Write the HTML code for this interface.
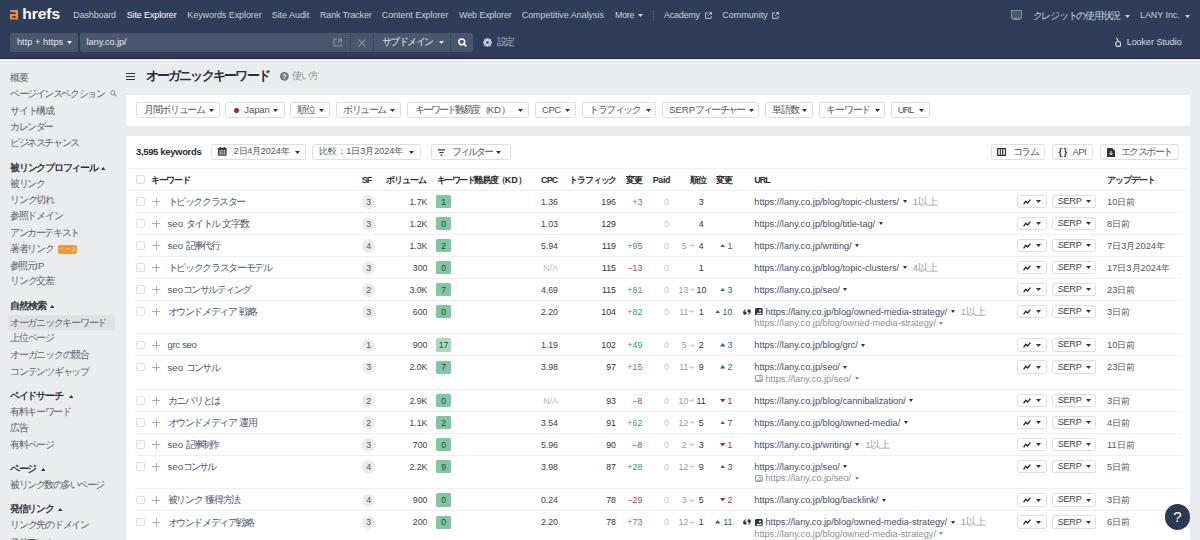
<!DOCTYPE html>
<html><head><meta charset="utf-8"><style>
*{margin:0;padding:0}
i{font-style:normal}
html,body{width:1200px;height:540px;overflow:hidden;background:#ebecee;font-family:"Liberation Sans", sans-serif;}
.t,.b,.ua{position:absolute;white-space:nowrap}
.ua{height:12px;line-height:12px;font-size:9.2px;color:#3f4b67}
.ua .u2{color:#8a8e96}
.car{display:inline-block;width:0;height:0;border-left:2.5px solid transparent;border-right:2.5px solid transparent;border-top:3px solid #333;margin-left:3.5px;vertical-align:1.5px}
.car.c2{border-top-color:#888}
.more{color:#9a9ea6;margin-left:6px;font-size:9.5px}
</style></head><body>

<div class="b" style="left:0px;top:0px;width:1200px;height:58.6px;background:#303d58;"></div>
<div class="b" style="left:0px;top:58px;width:1200px;height:1px;background:#1f2838;"></div>
<div class="b" style="left:0px;top:59px;width:1200px;height:1.5px;background:#eef0f7;"></div>
<svg class="b" style="left:9.8px;top:10.2px" width="8" height="9.6" viewBox="0 0 8 9.6"><path fill-rule="evenodd" d="M0.3 0H8V9.6H0V4H5.6V2.3H0.3ZM2.3 5.9V7.7H5.6V5.9Z" fill="#f28b3b"></path></svg>
<div class="t f" style="top:5.0px;font-size:15.5px;line-height:18px;color:#ffffff;font-weight:bold;left:22.2px;--w:38;"><span style="letter-spacing: 0.021px;">hrefs</span></div>
<div class="t f" style="top:10.05px;font-size:9px;line-height:11.7px;color:#c9d0dc;left:73.3px;--w:42.7;"><span style="letter-spacing: -0.157px;">Dashboard</span></div>
<div class="t f" style="top:10.05px;font-size:9px;line-height:11.7px;color:#ffffff;left:126.7px;--w:50;"><span style="letter-spacing: -0.122px;">Site Explorer</span></div>
<div class="t f" style="top:10.05px;font-size:9px;line-height:11.7px;color:#c9d0dc;left:187.3px;--w:74.4;"><span style="letter-spacing: -0.069px;">Keywords Explorer</span></div>
<div class="t f" style="top:10.05px;font-size:9px;line-height:11.7px;color:#c9d0dc;left:271.7px;--w:37.6;"><span style="letter-spacing: -0.045px;">Site Audit</span></div>
<div class="t f" style="top:10.05px;font-size:9px;line-height:11.7px;color:#c9d0dc;left:320px;--w:51.7;"><span style="letter-spacing: -0.159px;">Rank Tracker</span></div>
<div class="t f" style="top:10.05px;font-size:9px;line-height:11.7px;color:#c9d0dc;left:381.7px;--w:66.6;"><span style="letter-spacing: -0.061px;">Content Explorer</span></div>
<div class="t f" style="top:10.05px;font-size:9px;line-height:11.7px;color:#c9d0dc;left:459px;--w:52.7;"><span style="letter-spacing: -0.144px;">Web Explorer</span></div>
<div class="t f" style="top:10.05px;font-size:9px;line-height:11.7px;color:#c9d0dc;left:521.7px;--w:82.3;"><span style="letter-spacing: -0.038px;">Competitive Analysis</span></div>
<div class="t f" style="top:10.05px;font-size:9px;line-height:11.7px;color:#c9d0dc;left:615px;--w:19.3;"><span style="letter-spacing: -0.347px;">More</span></div>
<div class="t f" style="top:10.05px;font-size:9px;line-height:11.7px;color:#c9d0dc;left:664px;--w:36;"><span style="letter-spacing: -0.236px;">Academy</span></div>
<div class="t f" style="top:10.05px;font-size:9px;line-height:11.7px;color:#c9d0dc;left:722.3px;--w:45.4;"><span style="letter-spacing: -0.014px;">Community</span></div>
<svg class="b" style="left:638.3px;top:14.2px" width="5" height="3.2" viewBox="0 0 5 3.2"><polygon points="0,0 5,0 2.5,3.2" fill="#c9d0dc"></polygon></svg>
<div class="b" style="left:653px;top:11px;width:1px;height:10px;background:transparent;border-left:1px dotted #5d6880;"></div>
<svg class="b" style="left:705px;top:12.2px" width="7" height="7" viewBox="0 0 7 7"><path d="M3 0.9H0.6V6.4H6.1V4" fill="none" stroke="#c9d0dc" stroke-width="0.9"></path><path d="M4 0.6H6.4V3M6.4 0.6L3.2 3.8" fill="none" stroke="#c9d0dc" stroke-width="0.9"></path></svg>
<svg class="b" style="left:771.7px;top:12.2px" width="7" height="7" viewBox="0 0 7 7"><path d="M3 0.9H0.6V6.4H6.1V4" fill="none" stroke="#c9d0dc" stroke-width="0.9"></path><path d="M4 0.6H6.4V3M6.4 0.6L3.2 3.8" fill="none" stroke="#c9d0dc" stroke-width="0.9"></path></svg>
<svg class="b" style="left:1010.8px;top:10px" width="11" height="10" viewBox="0 0 11 10"><rect x="0.6" y="0.6" width="9.8" height="7.5" fill="none" stroke="#8b94a6" stroke-width="1.2"></rect><rect x="2" y="2" width="7" height="5" fill="#8b94a6" opacity="0.35"></rect><path d="M2 9.4H9" stroke="#8b94a6" stroke-width="1.2"></path></svg>
<div class="t f" style="top:9.62px;font-size:9.5px;line-height:12.35px;color:#c9d0dc;left:1032.5px;--w:87.5;"><span style="letter-spacing: 0px;"><i style="letter-spacing: -1.25px;">クレジットの使用状況</i></span></div>
<svg class="b" style="left:1125.3px;top:14.6px" width="5" height="3.2" viewBox="0 0 5 3.2"><polygon points="0,0 5,0 2.5,3.2" fill="#c9d0dc"></polygon></svg>
<div class="t f" style="top:9.95px;font-size:9px;line-height:11.7px;color:#c9d0dc;left:1140px;--w:39.7;"><span style="letter-spacing: -0.078px;">LANY Inc.</span></div>
<svg class="b" style="left:1185.3px;top:14.8px" width="5" height="3.2" viewBox="0 0 5 3.2"><polygon points="0,0 5,0 2.5,3.2" fill="#c9d0dc"></polygon></svg>
<div class="b" style="left:10px;top:33px;width:68px;height:19px;background:#4b566e;border-radius:2px;"></div>
<div class="t f" style="top:36.62px;font-size:9.2px;line-height:11.96px;color:#e6e9ef;left:16.9px;--w:46.3;"><span style="letter-spacing: 0.051px;">http + https</span></div>
<svg class="b" style="left:67.2px;top:41.4px" width="5" height="3.2" viewBox="0 0 5 3.2"><polygon points="0,0 5,0 2.5,3.2" fill="#e6e9ef"></polygon></svg>
<div class="b" style="left:80px;top:33px;width:392.5px;height:19px;background:#4b566e;border-radius:2px;"></div>
<div class="t f" style="top:36.62px;font-size:9.2px;line-height:11.96px;color:#e6e9ef;left:86.6px;--w:39.9;"><span style="letter-spacing: -0.075px;">lany.co.jp/</span></div>
<svg class="b" style="left:332.6px;top:38px" width="9.5" height="9" viewBox="0 0 9.5 9"><path d="M3.5 1H1V8H8V5.5" fill="none" stroke="#8c95a8" stroke-width="1.1"></path><path d="M5 1H8.3V4.3M8.3 1L4.5 4.8" fill="none" stroke="#8c95a8" stroke-width="1.1"></path></svg>
<div class="b" style="left:350px;top:34px;width:1px;height:17px;background:transparent;border-left:1px dotted #2e3850;"></div>
<div class="b" style="left:373.4px;top:34px;width:1.0px;height:17px;background:transparent;border-left:1px dotted #2e3850;"></div>
<div class="b" style="left:449.5px;top:34px;width:1.0px;height:17px;background:transparent;border-left:1px dotted #2e3850;"></div>
<svg class="b" style="left:357.5px;top:38.5px" width="8" height="8" viewBox="0 0 8 8"><path d="M0.7 0.7L7.3 7.3M7.3 0.7L0.7 7.3" stroke="#8c95a8" stroke-width="1.1"></path></svg>
<div class="t f" style="top:36.43px;font-size:9.5px;line-height:12.35px;color:#e6e9ef;left:381.5px;--w:51.5;"><span style="letter-spacing: 0px;"><i style="letter-spacing: -1.417px;">サブドメイン</i></span></div>
<svg class="b" style="left:438.5px;top:41.3px" width="5" height="3" viewBox="0 0 5 3"><polygon points="0,0 5,0 2.5,3" fill="#e6e9ef"></polygon></svg>
<svg class="b" style="left:457.6px;top:38.2px" width="9" height="9" viewBox="0 0 9 9"><circle cx="3.8" cy="3.8" r="2.9" fill="none" stroke="#fff" stroke-width="1.5"></circle><path d="M5.9 5.9L8.4 8.4" stroke="#fff" stroke-width="1.6"></path></svg>
<svg class="b" style="left:483px;top:38.2px" width="9" height="9" viewBox="0 0 9 9"><g transform="translate(4.5 4.5)" fill="#c9d0dc"><circle r="3.2"></circle><rect x="-1" y="-4.5" width="2" height="2.2" transform="rotate(0)"></rect><rect x="-1" y="-4.5" width="2" height="2.2" transform="rotate(45)"></rect><rect x="-1" y="-4.5" width="2" height="2.2" transform="rotate(90)"></rect><rect x="-1" y="-4.5" width="2" height="2.2" transform="rotate(135)"></rect><rect x="-1" y="-4.5" width="2" height="2.2" transform="rotate(180)"></rect><rect x="-1" y="-4.5" width="2" height="2.2" transform="rotate(225)"></rect><rect x="-1" y="-4.5" width="2" height="2.2" transform="rotate(270)"></rect><rect x="-1" y="-4.5" width="2" height="2.2" transform="rotate(315)"></rect><circle r="1.3" fill="#2e3b55"></circle></g></svg>
<div class="t f" style="top:36.43px;font-size:9.5px;line-height:12.35px;color:#aab2c2;left:496.5px;--w:17.5;"><span style="letter-spacing: 0px;"><i style="letter-spacing: -1.25px;">設定</i></span></div>
<svg class="b" style="left:1114.7px;top:36.5px" width="6.5" height="10.5" viewBox="0 0 6.5 10.5"><circle cx="3.2" cy="7" r="2.5" fill="none" stroke="#d6dbe4" stroke-width="1.2"></circle><path d="M1.5 0.8L3.3 4.3" stroke="#d6dbe4" stroke-width="1.2"></path></svg>
<div class="t f" style="top:36.65px;font-size:9px;line-height:11.7px;color:#d6dbe4;left:1126.7px;--w:55;"><span style="letter-spacing: -0.044px;">Looker Studio</span></div>
<div class="b" style="left:7.8px;top:314.9px;width:107.7px;height:15.1px;background:#dfe1e5;border-radius:3px;"></div>
<div class="t f" style="top:71.76px;font-size:9.6px;line-height:12.48px;color:#5c6068;left:10px;--w:17.1;"><span style="letter-spacing: 0px;"><i style="letter-spacing: -1.45px;">概要</i></span></div>
<div class="t f" style="top:88.26px;font-size:9.6px;line-height:12.48px;color:#5c6068;left:10px;--w:94.4;"><span style="letter-spacing: 0px;"><i style="letter-spacing: -1.418px;">ページインスペクション</i></span></div>
<div class="t f" style="top:105.16px;font-size:9.6px;line-height:12.48px;color:#5c6068;left:10px;--w:43.8;"><span style="letter-spacing: 0px;"><i style="letter-spacing: -1.24px;">サイト構成</i></span></div>
<div class="t f" style="top:120.66px;font-size:9.6px;line-height:12.48px;color:#5c6068;left:10px;--w:42.7;"><span style="letter-spacing: 0px;"><i style="letter-spacing: -1.46px;">カレンダー</i></span></div>
<div class="t f" style="top:137.36px;font-size:9.6px;line-height:12.48px;color:#5c6068;left:10px;--w:68.9;"><span style="letter-spacing: 0px;"><i style="letter-spacing: -1.387px;">ビジネスチャンス</i></span></div>
<div class="t f" style="top:161.76px;font-size:9.6px;line-height:12.48px;color:#2f343c;font-weight:bold;left:10px;--w:87.8;"><span style="letter-spacing: 0px;"><i style="letter-spacing: -1.22px;">被リンクプロフィール</i></span></div>
<div class="t f" style="top:177.76px;font-size:9.6px;line-height:12.48px;color:#5c6068;left:10px;--w:34.4;"><span style="letter-spacing: 0px;"><i style="letter-spacing: -1.4px;">被リンク</i></span></div>
<div class="t f" style="top:194.06px;font-size:9.6px;line-height:12.48px;color:#5c6068;left:10px;--w:43.8;"><span style="letter-spacing: 0px;"><i style="letter-spacing: -1.24px;">リンク切れ</i></span></div>
<div class="t f" style="top:210.46px;font-size:9.6px;line-height:12.48px;color:#5c6068;left:10px;--w:52.2;"><span style="letter-spacing: 0px;"><i style="letter-spacing: -1.3px;">参照ドメイン</i></span></div>
<div class="t f" style="top:227.16px;font-size:9.6px;line-height:12.48px;color:#5c6068;left:10px;--w:68.9;"><span style="letter-spacing: 0px;"><i style="letter-spacing: -1.387px;">アンカーテキスト</i></span></div>
<div class="t f" style="top:243.36px;font-size:9.6px;line-height:12.48px;color:#5c6068;left:10px;--w:43.3;"><span style="letter-spacing: 0px;"><i style="letter-spacing: -1.34px;">著者リンク</i></span></div>
<div class="t f" style="top:260.06px;font-size:9.6px;line-height:12.48px;color:#5c6068;left:10px;--w:34.4;"><span style="letter-spacing: 0px;"><i style="letter-spacing: -1.559px;">参照元</i>IP</span></div>
<div class="t f" style="top:275.46px;font-size:9.6px;line-height:12.48px;color:#5c6068;left:10px;--w:43.8;"><span style="letter-spacing: 0px;"><i style="letter-spacing: -1.24px;">リンク交差</i></span></div>
<div class="t f" style="top:300.46px;font-size:9.6px;line-height:12.48px;color:#2f343c;font-weight:bold;left:10px;--w:35.6;"><span style="letter-spacing: 0px;"><i style="letter-spacing: -1.1px;">自然検索</i></span></div>
<div class="t f" style="top:316.66px;font-size:9.6px;line-height:12.48px;color:#5c6068;left:10px;--w:96.2;"><span style="letter-spacing: 0px;"><i style="letter-spacing: -1.255px;">オーガニックキーワード</i></span></div>
<div class="t f" style="top:332.26px;font-size:9.6px;line-height:12.48px;color:#5c6068;left:10px;--w:43.8;"><span style="letter-spacing: 0px;"><i style="letter-spacing: -1.24px;">上位ページ</i></span></div>
<div class="t f" style="top:349.36px;font-size:9.6px;line-height:12.48px;color:#5c6068;left:10px;--w:78.9;"><span style="letter-spacing: 0px;"><i style="letter-spacing: -1.233px;">オーガニックの競合</i></span></div>
<div class="t f" style="top:365.56px;font-size:9.6px;line-height:12.48px;color:#5c6068;left:10px;--w:78.9;"><span style="letter-spacing: 0px;"><i style="letter-spacing: -1.233px;">コンテンツギャップ</i></span></div>
<div class="t f" style="top:390.06px;font-size:9.6px;line-height:12.48px;color:#2f343c;font-weight:bold;left:10px;--w:52.2;"><span style="letter-spacing: 0px;"><i style="letter-spacing: -1.3px;">ペイドサーチ</i></span></div>
<div class="t f" style="top:405.96px;font-size:9.6px;line-height:12.48px;color:#5c6068;left:10px;--w:60.5;"><span style="letter-spacing: 0px;"><i style="letter-spacing: -1.357px;">有料キーワード</i></span></div>
<div class="t f" style="top:422.46px;font-size:9.6px;line-height:12.48px;color:#5c6068;left:10px;--w:17.5;"><span style="letter-spacing: 0px;"><i style="letter-spacing: -1.25px;">広告</i></span></div>
<div class="t f" style="top:438.86px;font-size:9.6px;line-height:12.48px;color:#5c6068;left:10px;--w:43.8;"><span style="letter-spacing: 0px;"><i style="letter-spacing: -1.24px;">有料ページ</i></span></div>
<div class="t f" style="top:462.76px;font-size:9.6px;line-height:12.48px;color:#2f343c;font-weight:bold;left:10px;--w:25.5;"><span style="letter-spacing: 0px;"><i style="letter-spacing: -1.5px;">ページ</i></span></div>
<div class="t f" style="top:479.06px;font-size:9.6px;line-height:12.48px;color:#5c6068;left:10px;--w:94;"><span style="letter-spacing: 0px;"><i style="letter-spacing: -1.455px;">被リンク数の多いページ</i></span></div>
<div class="t f" style="top:503.16px;font-size:9.6px;line-height:12.48px;color:#2f343c;font-weight:bold;left:10px;--w:43.5;"><span style="letter-spacing: 0px;"><i style="letter-spacing: -1.3px;">発信リンク</i></span></div>
<div class="t f" style="top:519.46px;font-size:9.6px;line-height:12.48px;color:#5c6068;left:10px;--w:78.9;"><span style="letter-spacing: 0px;"><i style="letter-spacing: -1.233px;">リンク先のドメイン</i></span></div>
<div class="t f" style="top:536.96px;font-size:9.6px;line-height:12.48px;color:#5c6068;left:10px;--w:52;"><span style="letter-spacing: 0px;"><i style="letter-spacing: -1.333px;">発信アンカー</i></span></div>
<svg class="b" style="left:101px;top:166.5px" width="4.5" height="3" viewBox="0 0 4.5 3"><polygon points="0,3 4.5,3 2.25,0" fill="#333"></polygon></svg>
<svg class="b" style="left:49.5px;top:305.2px" width="4.5" height="3" viewBox="0 0 4.5 3"><polygon points="0,3 4.5,3 2.25,0" fill="#333"></polygon></svg>
<svg class="b" style="left:68.5px;top:394.8px" width="4.5" height="3" viewBox="0 0 4.5 3"><polygon points="0,3 4.5,3 2.25,0" fill="#333"></polygon></svg>
<svg class="b" style="left:40.5px;top:467.5px" width="4.5" height="3" viewBox="0 0 4.5 3"><polygon points="0,3 4.5,3 2.25,0" fill="#333"></polygon></svg>
<svg class="b" style="left:58px;top:507.9px" width="4.5" height="3" viewBox="0 0 4.5 3"><polygon points="0,3 4.5,3 2.25,0" fill="#333"></polygon></svg>
<svg class="b" style="left:110px;top:90px" width="7" height="7" viewBox="0 0 7 7"><circle cx="2.8" cy="2.8" r="2.1" fill="none" stroke="#888" stroke-width="1"></circle><path d="M4.3 4.3L6.3 6.3" stroke="#888" stroke-width="1.1"></path></svg>
<div class="b" style="left:58.2px;top:244.6px;width:19.1px;height:9.8px;background:#ee983c;border-radius:2px;"></div>
<div class="t" style="top:246.03px;font-size:5.5px;line-height:7.15px;color:#f9d3a8;left:-82.25px;width:300px;text-align:center;"><span><i>ベータ</i></span></div>
<div class="b" style="left:125.7px;top:72.7px;width:9.3px;height:1.2px;background:#333;"></div>
<div class="b" style="left:125.7px;top:75.9px;width:9.3px;height:1.2px;background:#333;"></div>
<div class="b" style="left:125.7px;top:79.10000000000001px;width:9.3px;height:1.2px;background:#333;"></div>
<div class="t f" style="top:67.75px;font-size:13px;line-height:16.9px;color:#2a2e35;font-weight:bold;left:145.5px;--w:123.5;"><span style="letter-spacing: 0px;"><i style="letter-spacing: -1.773px;">オーガニックキーワード</i></span></div>
<svg class="b" style="left:280px;top:71.8px" width="8.8" height="8.8" viewBox="0 0 8.8 8.8"><circle cx="4.4" cy="4.4" r="4.4" fill="#777"></circle><text x="4.4" y="7.2" font-size="7" font-weight="bold" text-anchor="middle" fill="#fff" font-family="Liberation Sans">?</text></svg>
<div class="t f" style="top:69.96px;font-size:9.6px;line-height:12.48px;color:#8a8f98;left:292px;--w:26;"><span style="letter-spacing: 0px;"><i style="letter-spacing: -1.333px;">使い方</i></span></div>
<div class="b" style="left:125.6px;top:94.6px;width:1064.4px;height:31.6px;background:#fff;"></div>
<div class="b" style="left:136.3px;top:102.1px;width:83.7px;height:16.2px;background:#fff;box-sizing:border-box;border:1px solid #dcdee2;border-radius:2.5px;"></div>
<div class="t f" style="top:104.02px;font-size:9.5px;line-height:12.35px;color:#555;left:144px;--w:60.5;"><span style="letter-spacing: 0px;"><i style="letter-spacing: -1.357px;">月間ボリューム</i></span></div>
<svg class="b" style="left:208.5px;top:108.9px" width="5" height="3" viewBox="0 0 5 3"><polygon points="0,0 5,0 2.5,3" fill="#333"></polygon></svg>
<div class="b" style="left:225.4px;top:102.1px;width:59.4px;height:16.2px;background:#fff;box-sizing:border-box;border:1px solid #dcdee2;border-radius:2.5px;"></div>
<div class="t f" style="top:104.02px;font-size:9.5px;line-height:12.35px;color:#555;left:244.3px;--w:25.5;"><span style="letter-spacing: -0.087px;">Japan</span></div>
<svg class="b" style="left:272.7px;top:108.9px" width="5" height="3" viewBox="0 0 5 3"><polygon points="0,0 5,0 2.5,3" fill="#333"></polygon></svg>
<div class="b" style="left:290px;top:102.1px;width:39.5px;height:16.2px;background:#fff;box-sizing:border-box;border:1px solid #dcdee2;border-radius:2.5px;"></div>
<div class="t f" style="top:104.02px;font-size:9.5px;line-height:12.35px;color:#555;left:296.7px;--w:17.8;"><span style="letter-spacing: 0px;"><i style="letter-spacing: -1.1px;">順位</i></span></div>
<svg class="b" style="left:318.5px;top:108.9px" width="5" height="3" viewBox="0 0 5 3"><polygon points="0,0 5,0 2.5,3" fill="#333"></polygon></svg>
<div class="b" style="left:335.5px;top:102.1px;width:65.75px;height:16.2px;background:#fff;box-sizing:border-box;border:1px solid #dcdee2;border-radius:2.5px;"></div>
<div class="t f" style="top:104.02px;font-size:9.5px;line-height:12.35px;color:#555;left:343px;--w:43;"><span style="letter-spacing: 0px;"><i style="letter-spacing: -1.4px;">ボリューム</i></span></div>
<svg class="b" style="left:390px;top:108.9px" width="5" height="3" viewBox="0 0 5 3"><polygon points="0,0 5,0 2.5,3" fill="#333"></polygon></svg>
<div class="b" style="left:406.75px;top:102.1px;width:122.0px;height:16.2px;background:#fff;box-sizing:border-box;border:1px solid #dcdee2;border-radius:2.5px;"></div>
<div class="t f" style="top:104.02px;font-size:9.5px;line-height:12.35px;color:#555;left:414.5px;--w:94.5;"><span style="letter-spacing: 0px;"><i style="letter-spacing: -1.87px;">キーワード難易度（</i>KD<i style="letter-spacing: -1.87px;">）</i></span></div>
<svg class="b" style="left:518px;top:108.9px" width="5" height="3" viewBox="0 0 5 3"><polygon points="0,0 5,0 2.5,3" fill="#333"></polygon></svg>
<div class="b" style="left:534.5px;top:102.1px;width:41.75px;height:16.2px;background:#fff;box-sizing:border-box;border:1px solid #dcdee2;border-radius:2.5px;"></div>
<div class="t f" style="top:104.02px;font-size:9.5px;line-height:12.35px;color:#555;left:542px;--w:19;"><span style="letter-spacing: -0.425px;">CPC</span></div>
<svg class="b" style="left:565px;top:108.9px" width="5" height="3" viewBox="0 0 5 3"><polygon points="0,0 5,0 2.5,3" fill="#333"></polygon></svg>
<div class="b" style="left:581.5px;top:102.1px;width:74.5px;height:16.2px;background:#fff;box-sizing:border-box;border:1px solid #dcdee2;border-radius:2.5px;"></div>
<div class="t f" style="top:104.02px;font-size:9.5px;line-height:12.35px;color:#555;left:589px;--w:51.5;"><span style="letter-spacing: 0px;"><i style="letter-spacing: -1.417px;">トラフィック</i></span></div>
<svg class="b" style="left:645.5px;top:108.9px" width="5" height="3" viewBox="0 0 5 3"><polygon points="0,0 5,0 2.5,3" fill="#333"></polygon></svg>
<div class="b" style="left:661.6px;top:102.1px;width:97.4px;height:16.2px;background:#fff;box-sizing:border-box;border:1px solid #dcdee2;border-radius:2.5px;"></div>
<div class="t f" style="top:104.02px;font-size:9.5px;line-height:12.35px;color:#555;left:669.2px;--w:75;"><span style="letter-spacing: 0px;">SERP<i style="letter-spacing: -1.813px;">フィーチャー</i></span></div>
<svg class="b" style="left:748.8px;top:108.9px" width="5" height="3" viewBox="0 0 5 3"><polygon points="0,0 5,0 2.5,3" fill="#333"></polygon></svg>
<div class="b" style="left:765.4px;top:102.1px;width:48.0px;height:16.2px;background:#fff;box-sizing:border-box;border:1px solid #dcdee2;border-radius:2.5px;"></div>
<div class="t f" style="top:104.02px;font-size:9.5px;line-height:12.35px;color:#555;left:772.2px;--w:26.5;"><span style="letter-spacing: 0px;"><i style="letter-spacing: -1.167px;">単語数</i></span></div>
<svg class="b" style="left:802.2px;top:108.9px" width="5" height="3" viewBox="0 0 5 3"><polygon points="0,0 5,0 2.5,3" fill="#333"></polygon></svg>
<div class="b" style="left:819.4px;top:102.1px;width:66.0px;height:16.2px;background:#fff;box-sizing:border-box;border:1px solid #dcdee2;border-radius:2.5px;"></div>
<div class="t f" style="top:104.02px;font-size:9.5px;line-height:12.35px;color:#555;left:826.2px;--w:44;"><span style="letter-spacing: 0px;"><i style="letter-spacing: -1.2px;">キーワード</i></span></div>
<svg class="b" style="left:875.2px;top:108.9px" width="5" height="3" viewBox="0 0 5 3"><polygon points="0,0 5,0 2.5,3" fill="#333"></polygon></svg>
<div class="b" style="left:891.4px;top:102.1px;width:39.0px;height:16.2px;background:#fff;box-sizing:border-box;border:1px solid #dcdee2;border-radius:2.5px;"></div>
<div class="t f" style="top:104.02px;font-size:9.5px;line-height:12.35px;color:#555;left:897.8px;--w:16;"><span style="letter-spacing: -1.206px;">URL</span></div>
<svg class="b" style="left:919.3px;top:108.9px" width="5" height="3" viewBox="0 0 5 3"><polygon points="0,0 5,0 2.5,3" fill="#333"></polygon></svg>
<div class="b" style="left:234px;top:108.3px;width:4.5px;height:4.5px;border-radius:50%;background:#a3222a"></div>
<div class="b" style="left:125.8px;top:135.8px;width:1064.2px;height:424.2px;background:#fff;"></div>
<div class="t f" style="top:146.02px;font-size:9.5px;line-height:12.35px;color:#2a2e35;font-weight:bold;left:136px;--w:65.5;"><span style="letter-spacing: -0.352px;">3,595 keywords</span></div>
<div class="b" style="left:211px;top:144px;width:95px;height:16px;background:#fff;box-sizing:border-box;border:1px solid #dcdee2;border-radius:2.5px;"></div>
<div class="t f" style="top:146.15px;font-size:9px;line-height:11.7px;color:#555;left:233.8px;--w:55.4;"><span style="letter-spacing: 0px;">2<i style="letter-spacing: -0.554px;">日</i>4<i style="letter-spacing: -0.554px;">月</i>2024<i style="letter-spacing: -0.554px;">年</i></span></div>
<svg class="b" style="left:295.3px;top:150.7px" width="5" height="3" viewBox="0 0 5 3"><polygon points="0,0 5,0 2.5,3" fill="#333"></polygon></svg>
<svg class="b" style="left:218.1px;top:147.2px" width="8.6" height="8.8" viewBox="0 0 8.6 8.8"><rect x="0" y="0.8" width="8.6" height="8" rx="1.2" fill="#34373d"></rect><rect x="1.3" y="3.2" width="6" height="4.3" fill="#e6e7e9"></rect><path d="M1.3 4.6H7.3M1.3 6H7.3M3.3 3.2V7.5M5.3 3.2V7.5" stroke="#34373d" stroke-width="0.6"></path><rect x="1.8" y="0" width="1.1" height="1.8" fill="#34373d"></rect><rect x="5.7" y="0" width="1.1" height="1.8" fill="#34373d"></rect></svg>
<div class="b" style="left:312.3px;top:144px;width:108.4px;height:16px;background:#fff;box-sizing:border-box;border:1px solid #dcdee2;border-radius:2.5px;"></div>
<div class="t f" style="top:146.15px;font-size:9px;line-height:11.7px;color:#555;left:319.3px;--w:84;"><span style="letter-spacing: 0px;"><i style="letter-spacing: -0.01px;">比較：</i>1<i style="letter-spacing: -0.01px;">日</i>3<i style="letter-spacing: -0.01px;">月</i>2024<i style="letter-spacing: -0.01px;">年</i></span></div>
<svg class="b" style="left:409.3px;top:150.7px" width="5" height="3" viewBox="0 0 5 3"><polygon points="0,0 5,0 2.5,3" fill="#333"></polygon></svg>
<div class="b" style="left:431px;top:144px;width:79.7px;height:16px;background:#fff;box-sizing:border-box;border:1px solid #dcdee2;border-radius:2.5px;"></div>
<div class="t f" style="top:145.82px;font-size:9.5px;line-height:12.35px;color:#555;left:452.3px;--w:39.4;"><span style="letter-spacing: 0px;"><i style="letter-spacing: -2.12px;">フィルター</i></span></div>
<svg class="b" style="left:496px;top:150.7px" width="5" height="3" viewBox="0 0 5 3"><polygon points="0,0 5,0 2.5,3" fill="#333"></polygon></svg>
<svg class="b" style="left:438.3px;top:148.5px" width="7" height="7" viewBox="0 0 7 7"><path d="M0 0.8H7M1.3 3.5H5.7M2.6 6.2H4.4" stroke="#333" stroke-width="1.2"></path></svg>
<div class="b" style="left:990.5px;top:144px;width:54.5px;height:16px;background:#fff;box-sizing:border-box;border:1px solid #dcdee2;border-radius:2.5px;"></div>
<div class="t f" style="top:145.82px;font-size:9.5px;line-height:12.35px;color:#555;left:1013px;--w:25;"><span style="letter-spacing: 0px;"><i style="letter-spacing: -1.667px;">コラム</i></span></div>
<svg class="b" style="left:997px;top:148px" width="9" height="8" viewBox="0 0 9 8"><rect x="0.6" y="0.6" width="7.8" height="6.8" fill="none" stroke="#333" stroke-width="1.2"></rect><path d="M3.3 0.6V7.4M5.7 0.6V7.4" stroke="#333" stroke-width="1.2"></path></svg>
<div class="b" style="left:1051.75px;top:144px;width:41.5px;height:16px;background:#fff;box-sizing:border-box;border:1px solid #dcdee2;border-radius:2.5px;"></div>
<div class="t f" style="top:145.82px;font-size:9.5px;line-height:12.35px;color:#555;left:1072.5px;--w:13.75;"><span style="letter-spacing: -0.625px;">API</span></div>
<div class="t f" style="top:145.82px;font-size:9.5px;line-height:12.35px;color:#333;font-weight:bold;left:1058.5px;--w:8.5;"><span style="letter-spacing: -0.619px;">{ }</span></div>
<div class="b" style="left:1099.5px;top:144px;width:79.7px;height:16px;background:#fff;box-sizing:border-box;border:1px solid #dcdee2;border-radius:2.5px;"></div>
<div class="t f" style="top:145.82px;font-size:9.5px;line-height:12.35px;color:#555;left:1120.8px;--w:50.9;"><span style="letter-spacing: 0px;"><i style="letter-spacing: -1.517px;">エクスポート</i></span></div>
<svg class="b" style="left:1107px;top:147.5px" width="8" height="9" viewBox="0 0 8 9"><path d="M0 0H5.2L8 2.8V9H0Z" fill="#333"></path><path d="M4 3V6.5M2.5 5.2L4 6.8L5.5 5.2" stroke="#fff" stroke-width="1" fill="none"></path></svg>
<div class="b" style="left:127px;top:168.3px;width:1061px;height:1.0px;background:#eeeff1;"></div>
<div class="b" style="left:136.3px;top:175.2px;width:8.7px;height:8.6px;background:#fff;box-sizing:border-box;border:1px solid #d7d9dd;border-radius:2px;"></div>
<div class="t f" style="top:174.55px;font-size:9px;line-height:11.7px;color:#2a2e35;font-weight:bold;left:150.8px;--w:39.2;"><span style="letter-spacing: 0px;"><i style="letter-spacing: -1.16px;">キーワード</i></span></div>
<div class="t f" style="top:174.55px;font-size:9px;line-height:11.7px;color:#2a2e35;font-weight:bold;left:361.7px;--w:10;"><span style="letter-spacing: -1.01px;">SF</span></div>
<div class="t f" style="top:174.55px;font-size:9px;line-height:11.7px;color:#2a2e35;font-weight:bold;left:385.8px;--w:40;"><span style="letter-spacing: 0px;"><i style="letter-spacing: -1px;">ボリューム</i></span></div>
<div class="t f" style="top:174.55px;font-size:9px;line-height:11.7px;color:#2a2e35;font-weight:bold;left:436.7px;--w:88.6;"><span style="letter-spacing: 0px;"><i style="letter-spacing: -1.44px;">キーワード難易度（</i>KD<i style="letter-spacing: -1.44px;">）</i></span></div>
<div class="t f" style="top:174.55px;font-size:9px;line-height:11.7px;color:#2a2e35;font-weight:bold;left:541px;--w:16.9;"><span style="letter-spacing: -0.846px;">CPC</span></div>
<div class="t f" style="top:174.55px;font-size:9px;line-height:11.7px;color:#2a2e35;font-weight:bold;left:569.4px;--w:46.8;"><span style="letter-spacing: 0px;"><i style="letter-spacing: -1.2px;">トラフィック</i></span></div>
<div class="t f" style="top:174.55px;font-size:9px;line-height:11.7px;color:#2a2e35;font-weight:bold;left:626.3px;--w:15.5;"><span style="letter-spacing: 0px;"><i style="letter-spacing: -1.25px;">変更</i></span></div>
<div class="t f" style="top:174.55px;font-size:9px;line-height:11.7px;color:#2a2e35;font-weight:bold;left:652.8px;--w:17.5;"><span style="letter-spacing: -0.433px;">Paid</span></div>
<div class="t f" style="top:174.55px;font-size:9px;line-height:11.7px;color:#2a2e35;font-weight:bold;left:689.5px;--w:16.1;"><span style="letter-spacing: 0px;"><i style="letter-spacing: -0.95px;">順位</i></span></div>
<div class="t f" style="top:174.55px;font-size:9px;line-height:11.7px;color:#2a2e35;font-weight:bold;left:716px;--w:16;"><span style="letter-spacing: 0px;"><i style="letter-spacing: -1px;">変更</i></span></div>
<div class="t f" style="top:174.55px;font-size:9px;line-height:11.7px;color:#2a2e35;font-weight:bold;left:754.3px;--w:16;"><span style="letter-spacing: -1px;">URL</span></div>
<div class="t f" style="top:174.55px;font-size:9px;line-height:11.7px;color:#2a2e35;font-weight:bold;left:1106.7px;--w:48;"><span style="letter-spacing: 0px;"><i style="letter-spacing: -1px;">アップデート</i></span></div>
<div class="b" style="left:127px;top:190px;width:1061px;height:1px;background:#eeeff1;"></div>
<div class="b" style="left:136.3px;top:197.1px;width:8.7px;height:8.7px;background:#fff;box-sizing:border-box;border:1px solid #dcdee2;border-radius:2px;"></div>
<div class="b" style="left:152px;top:201.0px;width:8px;height:1.0px;background:#a9adb3;"></div>
<div class="b" style="left:155.5px;top:197.5px;width:1.0px;height:8.0px;background:#a9adb3;"></div>
<div class="t f" style="top:195.86px;font-size:9.6px;line-height:12.48px;color:#4d5670;left:167.5px;--w:77.5;"><span style="letter-spacing: 0px;"><i style="letter-spacing: -1.389px;">トピッククラスター</i></span></div>
<div class="b" style="left:361.8px;top:195.2px;width:13.6px;height:13.6px;border-radius:50%;background:#ebebee"></div>
<div class="t" style="top:196.58px;font-size:8.8px;line-height:11.44px;color:#555;left:218.6px;width:300px;text-align:center;"><span>3</span></div>
<div class="t" style="top:196.58px;font-size:8.8px;line-height:11.44px;color:#444;left:127.5px;width:300px;text-align:right;"><span>1.7K</span></div>
<div class="b" style="left:436.2px;top:194.8px;width:14.8px;height:13.4px;background:#7fc6a2;border-radius:1.5px;"></div>
<div class="t" style="top:196.58px;font-size:8.8px;line-height:11.44px;color:#2b4a3a;left:293.6px;width:300px;text-align:center;"><span>1</span></div>
<div class="t" style="top:196.58px;font-size:8.8px;line-height:11.44px;color:#444;left:258px;width:300px;text-align:right;"><span>1.36</span></div>
<div class="t" style="top:196.58px;font-size:8.8px;line-height:11.44px;color:#333;left:316px;width:300px;text-align:right;"><span>196</span></div>
<div class="t" style="top:196.58px;font-size:8.8px;line-height:11.44px;color:#3b9a67;left:342.3px;width:300px;text-align:right;"><span>+3</span></div>
<div class="t" style="top:196.58px;font-size:8.8px;line-height:11.44px;color:#c5c7cb;left:368.8px;width:300px;text-align:right;"><span>0</span></div>
<div class="t" style="top:196.58px;font-size:8.8px;line-height:11.44px;color:#333;left:551.1px;width:300px;text-align:center;"><span>3</span></div>
<div class="ua" style="left:754.3px;top:195.5px;--cy:201.5"><span class="u">https://lany.co.jp/blog/topic-clusters/</span><span class="car"></span><span class="more">1以上</span></div>
<div class="b" style="left:1017px;top:194.7px;width:29.7px;height:13.6px;background:#fff;box-sizing:border-box;border:1px solid #dcdee2;border-radius:2.5px;"></div>
<svg class="b" style="left:1023px;top:198.5px" width="8" height="6" viewBox="0 0 8 6"><path d="M0.6 5.4L2.8 2.2L4.6 4L7.4 0.6" fill="none" stroke="#222" stroke-width="1.3"></path></svg>
<svg class="b" style="left:1035.5px;top:200.2px" width="5" height="3" viewBox="0 0 5 3"><polygon points="0,0 5,0 2.5,3" fill="#333"></polygon></svg>
<div class="b" style="left:1052px;top:194.7px;width:44.3px;height:13.6px;background:#fff;box-sizing:border-box;border:1px solid #dcdee2;border-radius:2.5px;"></div>
<div class="t f" style="top:195.82px;font-size:9.2px;line-height:11.96px;color:#444;left:1057.7px;--w:24;"><span style="letter-spacing: -0.295px;">SERP</span></div>
<svg class="b" style="left:1085.5px;top:200.2px" width="5" height="3" viewBox="0 0 5 3"><polygon points="0,0 5,0 2.5,3" fill="#333"></polygon></svg>
<div class="t" style="top:195.76px;font-size:9.3px;line-height:12.09px;color:#555;left:1107px;"><span>10<i>日前</i></span></div>
<div class="b" style="left:135px;top:211.8px;width:1047px;height:1.0px;background:#eeeff1;"></div>
<div class="b" style="left:136.3px;top:219.1px;width:8.7px;height:8.7px;background:#fff;box-sizing:border-box;border:1px solid #dcdee2;border-radius:2px;"></div>
<div class="b" style="left:152px;top:223.0px;width:8px;height:1.0px;background:#a9adb3;"></div>
<div class="b" style="left:155.5px;top:219.5px;width:1.0px;height:8.0px;background:#a9adb3;"></div>
<div class="t f" style="top:217.86px;font-size:9.6px;line-height:12.48px;color:#4d5670;left:167.5px;--w:80.6;"><span style="letter-spacing: 0px;">seo <i style="letter-spacing: -1.459px;">タイトル</i> <i style="letter-spacing: -1.459px;">文字数</i></span></div>
<div class="b" style="left:361.8px;top:217.2px;width:13.6px;height:13.6px;border-radius:50%;background:#ebebee"></div>
<div class="t" style="top:218.58px;font-size:8.8px;line-height:11.44px;color:#555;left:218.6px;width:300px;text-align:center;"><span>3</span></div>
<div class="t" style="top:218.58px;font-size:8.8px;line-height:11.44px;color:#444;left:127.5px;width:300px;text-align:right;"><span>1.2K</span></div>
<div class="b" style="left:436.2px;top:216.8px;width:14.8px;height:13.4px;background:#7fc6a2;border-radius:1.5px;"></div>
<div class="t" style="top:218.58px;font-size:8.8px;line-height:11.44px;color:#2b4a3a;left:293.6px;width:300px;text-align:center;"><span>0</span></div>
<div class="t" style="top:218.58px;font-size:8.8px;line-height:11.44px;color:#444;left:258px;width:300px;text-align:right;"><span>1.03</span></div>
<div class="t" style="top:218.58px;font-size:8.8px;line-height:11.44px;color:#333;left:316px;width:300px;text-align:right;"><span>129</span></div>
<div class="t" style="top:218.58px;font-size:8.8px;line-height:11.44px;color:#c5c7cb;left:368.8px;width:300px;text-align:right;"><span>0</span></div>
<div class="t" style="top:218.58px;font-size:8.8px;line-height:11.44px;color:#333;left:551.1px;width:300px;text-align:center;"><span>4</span></div>
<div class="ua" style="left:754.3px;top:217.5px;--cy:223.5"><span class="u">https://lany.co.jp/blog/title-tag/</span><span class="car"></span></div>
<div class="b" style="left:1017px;top:216.7px;width:29.7px;height:13.6px;background:#fff;box-sizing:border-box;border:1px solid #dcdee2;border-radius:2.5px;"></div>
<svg class="b" style="left:1023px;top:220.5px" width="8" height="6" viewBox="0 0 8 6"><path d="M0.6 5.4L2.8 2.2L4.6 4L7.4 0.6" fill="none" stroke="#222" stroke-width="1.3"></path></svg>
<svg class="b" style="left:1035.5px;top:222.2px" width="5" height="3" viewBox="0 0 5 3"><polygon points="0,0 5,0 2.5,3" fill="#333"></polygon></svg>
<div class="b" style="left:1052px;top:216.7px;width:44.3px;height:13.6px;background:#fff;box-sizing:border-box;border:1px solid #dcdee2;border-radius:2.5px;"></div>
<div class="t f" style="top:217.82px;font-size:9.2px;line-height:11.96px;color:#444;left:1057.7px;--w:24;"><span style="letter-spacing: -0.295px;">SERP</span></div>
<svg class="b" style="left:1085.5px;top:222.2px" width="5" height="3" viewBox="0 0 5 3"><polygon points="0,0 5,0 2.5,3" fill="#333"></polygon></svg>
<div class="t" style="top:217.76px;font-size:9.3px;line-height:12.09px;color:#555;left:1107px;"><span>8<i>日前</i></span></div>
<div class="b" style="left:135px;top:233.8px;width:1047px;height:1.0px;background:#eeeff1;"></div>
<div class="b" style="left:136.3px;top:241.1px;width:8.7px;height:8.7px;background:#fff;box-sizing:border-box;border:1px solid #dcdee2;border-radius:2px;"></div>
<div class="b" style="left:152px;top:245.0px;width:8px;height:1.0px;background:#a9adb3;"></div>
<div class="b" style="left:155.5px;top:241.5px;width:1.0px;height:8.0px;background:#a9adb3;"></div>
<div class="t f" style="top:239.86px;font-size:9.6px;line-height:12.48px;color:#4d5670;left:167.5px;--w:51.6;"><span style="letter-spacing: 0px;">seo <i style="letter-spacing: -1.635px;">記事代行</i></span></div>
<div class="b" style="left:361.8px;top:239.2px;width:13.6px;height:13.6px;border-radius:50%;background:#ebebee"></div>
<div class="t" style="top:240.58px;font-size:8.8px;line-height:11.44px;color:#555;left:218.6px;width:300px;text-align:center;"><span>4</span></div>
<div class="t" style="top:240.58px;font-size:8.8px;line-height:11.44px;color:#444;left:127.5px;width:300px;text-align:right;"><span>1.3K</span></div>
<div class="b" style="left:436.2px;top:238.8px;width:14.8px;height:13.4px;background:#7fc6a2;border-radius:1.5px;"></div>
<div class="t" style="top:240.58px;font-size:8.8px;line-height:11.44px;color:#2b4a3a;left:293.6px;width:300px;text-align:center;"><span>2</span></div>
<div class="t" style="top:240.58px;font-size:8.8px;line-height:11.44px;color:#444;left:258px;width:300px;text-align:right;"><span>5.94</span></div>
<div class="t" style="top:240.58px;font-size:8.8px;line-height:11.44px;color:#333;left:316px;width:300px;text-align:right;"><span>119</span></div>
<div class="t" style="top:240.58px;font-size:8.8px;line-height:11.44px;color:#3b9a67;left:342.3px;width:300px;text-align:right;"><span>+95</span></div>
<div class="t" style="top:240.58px;font-size:8.8px;line-height:11.44px;color:#c5c7cb;left:368.8px;width:300px;text-align:right;"><span>0</span></div>
<div class="t" style="top:240.58px;font-size:8.8px;line-height:11.44px;color:#333;left:551.1px;width:300px;text-align:center;"><span>4</span></div>
<div class="t" style="top:240.58px;font-size:8.8px;line-height:11.44px;color:#999;left:386.6px;width:300px;text-align:right;"><span>5</span></div>
<svg class="b" style="left:689.3px;top:243.0px" width="5.5" height="5" viewBox="0 0 5.5 5"><path d="M0 2.5H4.5M2.8 0.8L4.6 2.5L2.8 4.2" fill="none" stroke="#c4c6ca" stroke-width="0.9"></path></svg>
<div class="t" style="top:240.58px;font-size:8.8px;line-height:11.44px;color:#2c6e4c;left:432.3px;width:300px;text-align:right;"><span>1</span></div>
<svg class="b" style="left:719.8px;top:243.7px" width="5.4" height="3.6" viewBox="0 0 5.4 3.6"><polygon points="0,3.6 5.4,3.6 2.7,0" fill="#2c6e4c"></polygon></svg>
<div class="ua" style="left:754.3px;top:239.5px;--cy:245.5"><span class="u">https://lany.co.jp/writing/</span><span class="car"></span></div>
<div class="b" style="left:1017px;top:238.7px;width:29.7px;height:13.6px;background:#fff;box-sizing:border-box;border:1px solid #dcdee2;border-radius:2.5px;"></div>
<svg class="b" style="left:1023px;top:242.5px" width="8" height="6" viewBox="0 0 8 6"><path d="M0.6 5.4L2.8 2.2L4.6 4L7.4 0.6" fill="none" stroke="#222" stroke-width="1.3"></path></svg>
<svg class="b" style="left:1035.5px;top:244.2px" width="5" height="3" viewBox="0 0 5 3"><polygon points="0,0 5,0 2.5,3" fill="#333"></polygon></svg>
<div class="b" style="left:1052px;top:238.7px;width:44.3px;height:13.6px;background:#fff;box-sizing:border-box;border:1px solid #dcdee2;border-radius:2.5px;"></div>
<div class="t f" style="top:239.82px;font-size:9.2px;line-height:11.96px;color:#444;left:1057.7px;--w:24;"><span style="letter-spacing: -0.295px;">SERP</span></div>
<svg class="b" style="left:1085.5px;top:244.2px" width="5" height="3" viewBox="0 0 5 3"><polygon points="0,0 5,0 2.5,3" fill="#333"></polygon></svg>
<div class="t" style="top:239.76px;font-size:9.3px;line-height:12.09px;color:#555;left:1107px;"><span>7<i>日</i>3<i>月</i>2024<i>年</i></span></div>
<div class="b" style="left:135px;top:255.8px;width:1047px;height:1.0px;background:#eeeff1;"></div>
<div class="b" style="left:136.3px;top:263.1px;width:8.7px;height:8.7px;background:#fff;box-sizing:border-box;border:1px solid #dcdee2;border-radius:2px;"></div>
<div class="b" style="left:152px;top:267.0px;width:8px;height:1.0px;background:#a9adb3;"></div>
<div class="b" style="left:155.5px;top:263.5px;width:1.0px;height:8.0px;background:#a9adb3;"></div>
<div class="t f" style="top:261.86px;font-size:9.6px;line-height:12.48px;color:#4d5670;left:167.5px;--w:104;"><span style="letter-spacing: 0px;"><i style="letter-spacing: -1.333px;">トピッククラスターモデル</i></span></div>
<div class="b" style="left:361.8px;top:261.2px;width:13.6px;height:13.6px;border-radius:50%;background:#ebebee"></div>
<div class="t" style="top:262.58px;font-size:8.8px;line-height:11.44px;color:#555;left:218.6px;width:300px;text-align:center;"><span>3</span></div>
<div class="t" style="top:262.58px;font-size:8.8px;line-height:11.44px;color:#444;left:127.5px;width:300px;text-align:right;"><span>300</span></div>
<div class="b" style="left:436.2px;top:260.8px;width:14.8px;height:13.4px;background:#7fc6a2;border-radius:1.5px;"></div>
<div class="t" style="top:262.58px;font-size:8.8px;line-height:11.44px;color:#2b4a3a;left:293.6px;width:300px;text-align:center;"><span>0</span></div>
<div class="t" style="top:262.58px;font-size:8.8px;line-height:11.44px;color:#b8bbc0;left:258px;width:300px;text-align:right;"><span>N/A</span></div>
<div class="t" style="top:262.58px;font-size:8.8px;line-height:11.44px;color:#333;left:316px;width:300px;text-align:right;"><span>115</span></div>
<div class="t" style="top:262.58px;font-size:8.8px;line-height:11.44px;color:#b5473c;left:342.3px;width:300px;text-align:right;"><span>−13</span></div>
<div class="t" style="top:262.58px;font-size:8.8px;line-height:11.44px;color:#c5c7cb;left:368.8px;width:300px;text-align:right;"><span>0</span></div>
<div class="t" style="top:262.58px;font-size:8.8px;line-height:11.44px;color:#333;left:551.1px;width:300px;text-align:center;"><span>1</span></div>
<div class="ua" style="left:754.3px;top:261.5px;--cy:267.5"><span class="u">https://lany.co.jp/blog/topic-clusters/</span><span class="car"></span><span class="more">4以上</span></div>
<div class="b" style="left:1017px;top:260.7px;width:29.7px;height:13.6px;background:#fff;box-sizing:border-box;border:1px solid #dcdee2;border-radius:2.5px;"></div>
<svg class="b" style="left:1023px;top:264.5px" width="8" height="6" viewBox="0 0 8 6"><path d="M0.6 5.4L2.8 2.2L4.6 4L7.4 0.6" fill="none" stroke="#222" stroke-width="1.3"></path></svg>
<svg class="b" style="left:1035.5px;top:266.2px" width="5" height="3" viewBox="0 0 5 3"><polygon points="0,0 5,0 2.5,3" fill="#333"></polygon></svg>
<div class="b" style="left:1052px;top:260.7px;width:44.3px;height:13.6px;background:#fff;box-sizing:border-box;border:1px solid #dcdee2;border-radius:2.5px;"></div>
<div class="t f" style="top:261.82px;font-size:9.2px;line-height:11.96px;color:#444;left:1057.7px;--w:24;"><span style="letter-spacing: -0.295px;">SERP</span></div>
<svg class="b" style="left:1085.5px;top:266.2px" width="5" height="3" viewBox="0 0 5 3"><polygon points="0,0 5,0 2.5,3" fill="#333"></polygon></svg>
<div class="t" style="top:261.75px;font-size:9.3px;line-height:12.09px;color:#555;left:1107px;"><span>17<i>日</i>3<i>月</i>2024<i>年</i></span></div>
<div class="b" style="left:135px;top:277.8px;width:1047px;height:1.0px;background:#eeeff1;"></div>
<div class="b" style="left:136.3px;top:285.1px;width:8.7px;height:8.7px;background:#fff;box-sizing:border-box;border:1px solid #dcdee2;border-radius:2px;"></div>
<div class="b" style="left:152px;top:289.0px;width:8px;height:1.0px;background:#a9adb3;"></div>
<div class="b" style="left:155.5px;top:285.5px;width:1.0px;height:8.0px;background:#a9adb3;"></div>
<div class="t f" style="top:283.86px;font-size:9.6px;line-height:12.48px;color:#4d5670;left:167.5px;--w:83.3;"><span style="letter-spacing: 0px;">seo<i style="letter-spacing: -1.521px;">コンサルティング</i></span></div>
<div class="b" style="left:361.8px;top:283.2px;width:13.6px;height:13.6px;border-radius:50%;background:#ebebee"></div>
<div class="t" style="top:284.58px;font-size:8.8px;line-height:11.44px;color:#555;left:218.6px;width:300px;text-align:center;"><span>2</span></div>
<div class="t" style="top:284.58px;font-size:8.8px;line-height:11.44px;color:#444;left:127.5px;width:300px;text-align:right;"><span>3.0K</span></div>
<div class="b" style="left:436.2px;top:282.8px;width:14.8px;height:13.4px;background:#7fc6a2;border-radius:1.5px;"></div>
<div class="t" style="top:284.58px;font-size:8.8px;line-height:11.44px;color:#2b4a3a;left:293.6px;width:300px;text-align:center;"><span>7</span></div>
<div class="t" style="top:284.58px;font-size:8.8px;line-height:11.44px;color:#444;left:258px;width:300px;text-align:right;"><span>4.69</span></div>
<div class="t" style="top:284.58px;font-size:8.8px;line-height:11.44px;color:#333;left:316px;width:300px;text-align:right;"><span>115</span></div>
<div class="t" style="top:284.58px;font-size:8.8px;line-height:11.44px;color:#3b9a67;left:342.3px;width:300px;text-align:right;"><span>+81</span></div>
<div class="t" style="top:284.58px;font-size:8.8px;line-height:11.44px;color:#c5c7cb;left:368.8px;width:300px;text-align:right;"><span>0</span></div>
<div class="t" style="top:284.58px;font-size:8.8px;line-height:11.44px;color:#333;left:696.6px;"><span>10</span></div>
<div class="t" style="top:284.58px;font-size:8.8px;line-height:11.44px;color:#999;left:388.4px;width:300px;text-align:right;"><span>13</span></div>
<svg class="b" style="left:689.3px;top:287.0px" width="5.5" height="5" viewBox="0 0 5.5 5"><path d="M0 2.5H4.5M2.8 0.8L4.6 2.5L2.8 4.2" fill="none" stroke="#c4c6ca" stroke-width="0.9"></path></svg>
<div class="t" style="top:284.58px;font-size:8.8px;line-height:11.44px;color:#2c6e4c;left:432.3px;width:300px;text-align:right;"><span>3</span></div>
<svg class="b" style="left:719.8px;top:287.7px" width="5.4" height="3.6" viewBox="0 0 5.4 3.6"><polygon points="0,3.6 5.4,3.6 2.7,0" fill="#2c6e4c"></polygon></svg>
<div class="ua" style="left:754.3px;top:283.5px;--cy:289.5"><span class="u">https://lany.co.jp/seo/</span><span class="car"></span></div>
<div class="b" style="left:1017px;top:282.7px;width:29.7px;height:13.6px;background:#fff;box-sizing:border-box;border:1px solid #dcdee2;border-radius:2.5px;"></div>
<svg class="b" style="left:1023px;top:286.5px" width="8" height="6" viewBox="0 0 8 6"><path d="M0.6 5.4L2.8 2.2L4.6 4L7.4 0.6" fill="none" stroke="#222" stroke-width="1.3"></path></svg>
<svg class="b" style="left:1035.5px;top:288.2px" width="5" height="3" viewBox="0 0 5 3"><polygon points="0,0 5,0 2.5,3" fill="#333"></polygon></svg>
<div class="b" style="left:1052px;top:282.7px;width:44.3px;height:13.6px;background:#fff;box-sizing:border-box;border:1px solid #dcdee2;border-radius:2.5px;"></div>
<div class="t f" style="top:283.82px;font-size:9.2px;line-height:11.96px;color:#444;left:1057.7px;--w:24;"><span style="letter-spacing: -0.295px;">SERP</span></div>
<svg class="b" style="left:1085.5px;top:288.2px" width="5" height="3" viewBox="0 0 5 3"><polygon points="0,0 5,0 2.5,3" fill="#333"></polygon></svg>
<div class="t" style="top:283.75px;font-size:9.3px;line-height:12.09px;color:#555;left:1107px;"><span>23<i>日前</i></span></div>
<div class="b" style="left:135px;top:299.8px;width:1047px;height:1.0px;background:#eeeff1;"></div>
<div class="b" style="left:136.3px;top:307.3px;width:8.7px;height:8.7px;background:#fff;box-sizing:border-box;border:1px solid #dcdee2;border-radius:2px;"></div>
<div class="b" style="left:152px;top:311.2px;width:8px;height:1.0px;background:#a9adb3;"></div>
<div class="b" style="left:155.5px;top:307.7px;width:1.0px;height:8.0px;background:#a9adb3;"></div>
<div class="t f" style="top:306.06px;font-size:9.6px;line-height:12.48px;color:#4d5670;left:167.5px;--w:89;"><span style="letter-spacing: 0px;"><i style="letter-spacing: -1.367px;">オウンドメディア</i> <i style="letter-spacing: -1.367px;">戦略</i></span></div>
<div class="b" style="left:361.8px;top:305.4px;width:13.6px;height:13.6px;border-radius:50%;background:#ebebee"></div>
<div class="t" style="top:306.78px;font-size:8.8px;line-height:11.44px;color:#555;left:218.6px;width:300px;text-align:center;"><span>3</span></div>
<div class="t" style="top:306.78px;font-size:8.8px;line-height:11.44px;color:#444;left:127.5px;width:300px;text-align:right;"><span>600</span></div>
<div class="b" style="left:436.2px;top:305.0px;width:14.8px;height:13.4px;background:#7fc6a2;border-radius:1.5px;"></div>
<div class="t" style="top:306.78px;font-size:8.8px;line-height:11.44px;color:#2b4a3a;left:293.6px;width:300px;text-align:center;"><span>0</span></div>
<div class="t" style="top:306.78px;font-size:8.8px;line-height:11.44px;color:#444;left:258px;width:300px;text-align:right;"><span>2.20</span></div>
<div class="t" style="top:306.78px;font-size:8.8px;line-height:11.44px;color:#333;left:316px;width:300px;text-align:right;"><span>104</span></div>
<div class="t" style="top:306.78px;font-size:8.8px;line-height:11.44px;color:#3b9a67;left:342.3px;width:300px;text-align:right;"><span>+82</span></div>
<div class="t" style="top:306.78px;font-size:8.8px;line-height:11.44px;color:#c5c7cb;left:368.8px;width:300px;text-align:right;"><span>0</span></div>
<div class="t" style="top:306.78px;font-size:8.8px;line-height:11.44px;color:#333;left:551.1px;width:300px;text-align:center;"><span>1</span></div>
<div class="t" style="top:306.78px;font-size:8.8px;line-height:11.44px;color:#999;left:388.4px;width:300px;text-align:right;"><span>11</span></div>
<svg class="b" style="left:689.3px;top:309.2px" width="5.5" height="5" viewBox="0 0 5.5 5"><path d="M0 2.5H4.5M2.8 0.8L4.6 2.5L2.8 4.2" fill="none" stroke="#c4c6ca" stroke-width="0.9"></path></svg>
<div class="t" style="top:306.78px;font-size:8.8px;line-height:11.44px;color:#2c6e4c;left:432.3px;width:300px;text-align:right;"><span>10</span></div>
<svg class="b" style="left:714.8px;top:309.9px" width="5.4" height="3.6" viewBox="0 0 5.4 3.6"><polygon points="0,3.6 5.4,3.6 2.7,0" fill="#2c6e4c"></polygon></svg>
<svg class="b" style="left:743.3px;top:308.9px" width="8.2" height="6" viewBox="0 0 8.2 6"><g fill="#2c3344"><circle cx="1.9" cy="4" r="1.75"></circle><path d="M0.15 4C0.15 2 1.1 0.7 2.8 0.2L3 0.9C2 1.4 1.5 2.1 1.4 2.8Z"></path><circle cx="6.1" cy="2" r="1.75"></circle><path d="M7.85 2C7.85 4 6.9 5.3 5.2 5.8L5 5.1C6 4.6 6.5 3.9 6.6 3.2Z"></path></g></svg>
<svg class="b" style="left:755px;top:308.09999999999997px" width="7.6" height="7.4" viewBox="0 0 7.6 7.4"><rect x="0" y="0" width="7.6" height="7.4" rx="1.3" fill="#2c3344"></rect><path d="M1.2 6.3L3 4.4L4.5 5.3L6.4 4.3V6.3Z" fill="#fff"></path><circle cx="5" cy="2.5" r="1.1" fill="#fff"></circle></svg>
<div class="ua" style="left:765.5px;top:305.7px;--cy:311.7"><span class="u">https://lany.co.jp/blog/owned-media-strategy/</span><span class="car"></span><span class="more">1以上</span></div>
<div class="ua" style="left:754.3px;top:317.3px;"><span class="u2">https://lany.co.jp/blog/owned-media-strategy/</span><span class="car c2"></span></div>
<div class="b" style="left:1017px;top:304.9px;width:29.7px;height:13.6px;background:#fff;box-sizing:border-box;border:1px solid #dcdee2;border-radius:2.5px;"></div>
<svg class="b" style="left:1023px;top:308.7px" width="8" height="6" viewBox="0 0 8 6"><path d="M0.6 5.4L2.8 2.2L4.6 4L7.4 0.6" fill="none" stroke="#222" stroke-width="1.3"></path></svg>
<svg class="b" style="left:1035.5px;top:310.4px" width="5" height="3" viewBox="0 0 5 3"><polygon points="0,0 5,0 2.5,3" fill="#333"></polygon></svg>
<div class="b" style="left:1052px;top:304.9px;width:44.3px;height:13.6px;background:#fff;box-sizing:border-box;border:1px solid #dcdee2;border-radius:2.5px;"></div>
<div class="t f" style="top:306.02px;font-size:9.2px;line-height:11.96px;color:#444;left:1057.7px;--w:24;"><span style="letter-spacing: -0.295px;">SERP</span></div>
<svg class="b" style="left:1085.5px;top:310.4px" width="5" height="3" viewBox="0 0 5 3"><polygon points="0,0 5,0 2.5,3" fill="#333"></polygon></svg>
<div class="t" style="top:305.95px;font-size:9.3px;line-height:12.09px;color:#555;left:1107px;"><span>3<i>日前</i></span></div>
<div class="b" style="left:135px;top:333.3px;width:1047px;height:1.0px;background:#eeeff1;"></div>
<div class="b" style="left:136.3px;top:340.6px;width:8.7px;height:8.7px;background:#fff;box-sizing:border-box;border:1px solid #dcdee2;border-radius:2px;"></div>
<div class="b" style="left:152px;top:344.5px;width:8px;height:1.0px;background:#a9adb3;"></div>
<div class="b" style="left:155.5px;top:341.0px;width:1.0px;height:8.0px;background:#a9adb3;"></div>
<div class="t f" style="top:339.36px;font-size:9.6px;line-height:12.48px;color:#4d5670;left:167.5px;--w:29.3;"><span style="letter-spacing: -0.334px;">grc seo</span></div>
<div class="b" style="left:361.8px;top:338.7px;width:13.6px;height:13.6px;border-radius:50%;background:#ebebee"></div>
<div class="t" style="top:340.08px;font-size:8.8px;line-height:11.44px;color:#555;left:218.6px;width:300px;text-align:center;"><span>1</span></div>
<div class="t" style="top:340.08px;font-size:8.8px;line-height:11.44px;color:#444;left:127.5px;width:300px;text-align:right;"><span>900</span></div>
<div class="b" style="left:436.2px;top:338.3px;width:14.8px;height:13.4px;background:#a8d8c0;border-radius:1.5px;"></div>
<div class="t" style="top:340.08px;font-size:8.8px;line-height:11.44px;color:#2b4a3a;left:293.6px;width:300px;text-align:center;"><span>17</span></div>
<div class="t" style="top:340.08px;font-size:8.8px;line-height:11.44px;color:#444;left:258px;width:300px;text-align:right;"><span>1.19</span></div>
<div class="t" style="top:340.08px;font-size:8.8px;line-height:11.44px;color:#333;left:316px;width:300px;text-align:right;"><span>102</span></div>
<div class="t" style="top:340.08px;font-size:8.8px;line-height:11.44px;color:#3b9a67;left:342.3px;width:300px;text-align:right;"><span>+49</span></div>
<div class="t" style="top:340.08px;font-size:8.8px;line-height:11.44px;color:#c5c7cb;left:368.8px;width:300px;text-align:right;"><span>0</span></div>
<div class="t" style="top:340.08px;font-size:8.8px;line-height:11.44px;color:#333;left:551.1px;width:300px;text-align:center;"><span>2</span></div>
<div class="t" style="top:340.08px;font-size:8.8px;line-height:11.44px;color:#999;left:386.6px;width:300px;text-align:right;"><span>5</span></div>
<svg class="b" style="left:689.3px;top:342.5px" width="5.5" height="5" viewBox="0 0 5.5 5"><path d="M0 2.5H4.5M2.8 0.8L4.6 2.5L2.8 4.2" fill="none" stroke="#c4c6ca" stroke-width="0.9"></path></svg>
<div class="t" style="top:340.08px;font-size:8.8px;line-height:11.44px;color:#2c6e4c;left:432.3px;width:300px;text-align:right;"><span>3</span></div>
<svg class="b" style="left:719.8px;top:343.2px" width="5.4" height="3.6" viewBox="0 0 5.4 3.6"><polygon points="0,3.6 5.4,3.6 2.7,0" fill="#2c6e4c"></polygon></svg>
<div class="ua" style="left:754.3px;top:339.0px;--cy:345.0"><span class="u">https://lany.co.jp/blog/grc/</span><span class="car"></span></div>
<div class="b" style="left:1017px;top:338.2px;width:29.7px;height:13.6px;background:#fff;box-sizing:border-box;border:1px solid #dcdee2;border-radius:2.5px;"></div>
<svg class="b" style="left:1023px;top:342.0px" width="8" height="6" viewBox="0 0 8 6"><path d="M0.6 5.4L2.8 2.2L4.6 4L7.4 0.6" fill="none" stroke="#222" stroke-width="1.3"></path></svg>
<svg class="b" style="left:1035.5px;top:343.7px" width="5" height="3" viewBox="0 0 5 3"><polygon points="0,0 5,0 2.5,3" fill="#333"></polygon></svg>
<div class="b" style="left:1052px;top:338.2px;width:44.3px;height:13.6px;background:#fff;box-sizing:border-box;border:1px solid #dcdee2;border-radius:2.5px;"></div>
<div class="t f" style="top:339.32px;font-size:9.2px;line-height:11.96px;color:#444;left:1057.7px;--w:24;"><span style="letter-spacing: -0.295px;">SERP</span></div>
<svg class="b" style="left:1085.5px;top:343.7px" width="5" height="3" viewBox="0 0 5 3"><polygon points="0,0 5,0 2.5,3" fill="#333"></polygon></svg>
<div class="t" style="top:339.25px;font-size:9.3px;line-height:12.09px;color:#555;left:1107px;"><span>10<i>日前</i></span></div>
<div class="b" style="left:135px;top:355.3px;width:1047px;height:1.0px;background:#eeeff1;"></div>
<div class="b" style="left:136.3px;top:362.8px;width:8.7px;height:8.7px;background:#fff;box-sizing:border-box;border:1px solid #dcdee2;border-radius:2px;"></div>
<div class="b" style="left:152px;top:366.7px;width:8px;height:1.0px;background:#a9adb3;"></div>
<div class="b" style="left:155.5px;top:363.2px;width:1.0px;height:8.0px;background:#a9adb3;"></div>
<div class="t f" style="top:361.56px;font-size:9.6px;line-height:12.48px;color:#4d5670;left:167.5px;--w:51.6;"><span style="letter-spacing: 0px;">seo <i style="letter-spacing: -1.635px;">コンサル</i></span></div>
<div class="b" style="left:361.8px;top:360.9px;width:13.6px;height:13.6px;border-radius:50%;background:#ebebee"></div>
<div class="t" style="top:362.28px;font-size:8.8px;line-height:11.44px;color:#555;left:218.6px;width:300px;text-align:center;"><span>3</span></div>
<div class="t" style="top:362.28px;font-size:8.8px;line-height:11.44px;color:#444;left:127.5px;width:300px;text-align:right;"><span>2.0K</span></div>
<div class="b" style="left:436.2px;top:360.5px;width:14.8px;height:13.4px;background:#7fc6a2;border-radius:1.5px;"></div>
<div class="t" style="top:362.28px;font-size:8.8px;line-height:11.44px;color:#2b4a3a;left:293.6px;width:300px;text-align:center;"><span>7</span></div>
<div class="t" style="top:362.28px;font-size:8.8px;line-height:11.44px;color:#444;left:258px;width:300px;text-align:right;"><span>3.98</span></div>
<div class="t" style="top:362.28px;font-size:8.8px;line-height:11.44px;color:#333;left:316px;width:300px;text-align:right;"><span>97</span></div>
<div class="t" style="top:362.28px;font-size:8.8px;line-height:11.44px;color:#3b9a67;left:342.3px;width:300px;text-align:right;"><span>+15</span></div>
<div class="t" style="top:362.28px;font-size:8.8px;line-height:11.44px;color:#c5c7cb;left:368.8px;width:300px;text-align:right;"><span>0</span></div>
<div class="t" style="top:362.28px;font-size:8.8px;line-height:11.44px;color:#333;left:551.1px;width:300px;text-align:center;"><span>9</span></div>
<div class="t" style="top:362.28px;font-size:8.8px;line-height:11.44px;color:#999;left:388.4px;width:300px;text-align:right;"><span>11</span></div>
<svg class="b" style="left:689.3px;top:364.7px" width="5.5" height="5" viewBox="0 0 5.5 5"><path d="M0 2.5H4.5M2.8 0.8L4.6 2.5L2.8 4.2" fill="none" stroke="#c4c6ca" stroke-width="0.9"></path></svg>
<div class="t" style="top:362.28px;font-size:8.8px;line-height:11.44px;color:#2c6e4c;left:432.3px;width:300px;text-align:right;"><span>2</span></div>
<svg class="b" style="left:719.8px;top:365.4px" width="5.4" height="3.6" viewBox="0 0 5.4 3.6"><polygon points="0,3.6 5.4,3.6 2.7,0" fill="#2c6e4c"></polygon></svg>
<div class="ua" style="left:754.3px;top:361.2px;--cy:367.2"><span class="u">https://lany.co.jp/seo/</span><span class="car"></span></div>
<svg class="b" style="left:754.9px;top:375.3px" width="7.8" height="7" viewBox="0 0 7.8 7"><rect x="0.55" y="0.55" width="6.7" height="5.9" rx="1" fill="none" stroke="#9a9da3" stroke-width="1.1"></rect><path d="M1.3 5.8L3 4.2L4.4 5L6.5 3.9V5.8Z" fill="#9a9da3"></path><circle cx="5" cy="2.5" r="0.9" fill="#9a9da3"></circle></svg>
<div class="ua" style="left:765.5px;top:372.8px;"><span class="u2">https://lany.co.jp/seo/</span><span class="car c2"></span></div>
<div class="b" style="left:1017px;top:360.4px;width:29.7px;height:13.6px;background:#fff;box-sizing:border-box;border:1px solid #dcdee2;border-radius:2.5px;"></div>
<svg class="b" style="left:1023px;top:364.2px" width="8" height="6" viewBox="0 0 8 6"><path d="M0.6 5.4L2.8 2.2L4.6 4L7.4 0.6" fill="none" stroke="#222" stroke-width="1.3"></path></svg>
<svg class="b" style="left:1035.5px;top:365.9px" width="5" height="3" viewBox="0 0 5 3"><polygon points="0,0 5,0 2.5,3" fill="#333"></polygon></svg>
<div class="b" style="left:1052px;top:360.4px;width:44.3px;height:13.6px;background:#fff;box-sizing:border-box;border:1px solid #dcdee2;border-radius:2.5px;"></div>
<div class="t f" style="top:361.52px;font-size:9.2px;line-height:11.96px;color:#444;left:1057.7px;--w:24;"><span style="letter-spacing: -0.295px;">SERP</span></div>
<svg class="b" style="left:1085.5px;top:365.9px" width="5" height="3" viewBox="0 0 5 3"><polygon points="0,0 5,0 2.5,3" fill="#333"></polygon></svg>
<div class="t" style="top:361.45px;font-size:9.3px;line-height:12.09px;color:#555;left:1107px;"><span>23<i>日前</i></span></div>
<div class="b" style="left:135px;top:388.8px;width:1047px;height:1.0px;background:#eeeff1;"></div>
<div class="b" style="left:136.3px;top:396.1px;width:8.7px;height:8.7px;background:#fff;box-sizing:border-box;border:1px solid #dcdee2;border-radius:2px;"></div>
<div class="b" style="left:152px;top:400.0px;width:8px;height:1.0px;background:#a9adb3;"></div>
<div class="b" style="left:155.5px;top:396.5px;width:1.0px;height:8.0px;background:#a9adb3;"></div>
<div class="t f" style="top:394.86px;font-size:9.6px;line-height:12.48px;color:#4d5670;left:167.5px;--w:52.5;"><span style="letter-spacing: 0px;"><i style="letter-spacing: -1.25px;">カニバリとは</i></span></div>
<div class="b" style="left:361.8px;top:394.2px;width:13.6px;height:13.6px;border-radius:50%;background:#ebebee"></div>
<div class="t" style="top:395.58px;font-size:8.8px;line-height:11.44px;color:#555;left:218.6px;width:300px;text-align:center;"><span>2</span></div>
<div class="t" style="top:395.58px;font-size:8.8px;line-height:11.44px;color:#444;left:127.5px;width:300px;text-align:right;"><span>2.9K</span></div>
<div class="b" style="left:436.2px;top:393.8px;width:14.8px;height:13.4px;background:#7fc6a2;border-radius:1.5px;"></div>
<div class="t" style="top:395.58px;font-size:8.8px;line-height:11.44px;color:#2b4a3a;left:293.6px;width:300px;text-align:center;"><span>0</span></div>
<div class="t" style="top:395.58px;font-size:8.8px;line-height:11.44px;color:#b8bbc0;left:258px;width:300px;text-align:right;"><span>N/A</span></div>
<div class="t" style="top:395.58px;font-size:8.8px;line-height:11.44px;color:#333;left:316px;width:300px;text-align:right;"><span>93</span></div>
<div class="t" style="top:395.58px;font-size:8.8px;line-height:11.44px;color:#b5473c;left:342.3px;width:300px;text-align:right;"><span>−8</span></div>
<div class="t" style="top:395.58px;font-size:8.8px;line-height:11.44px;color:#c5c7cb;left:368.8px;width:300px;text-align:right;"><span>0</span></div>
<div class="t" style="top:395.58px;font-size:8.8px;line-height:11.44px;color:#333;left:696.6px;"><span>11</span></div>
<div class="t" style="top:395.58px;font-size:8.8px;line-height:11.44px;color:#999;left:388.4px;width:300px;text-align:right;"><span>10</span></div>
<svg class="b" style="left:689.3px;top:398.0px" width="5.5" height="5" viewBox="0 0 5.5 5"><path d="M0 2.5H4.5M2.8 0.8L4.6 2.5L2.8 4.2" fill="none" stroke="#c4c6ca" stroke-width="0.9"></path></svg>
<div class="t" style="top:395.58px;font-size:8.8px;line-height:11.44px;color:#a3322a;left:432.3px;width:300px;text-align:right;"><span>1</span></div>
<svg class="b" style="left:719.8px;top:398.7px" width="5.4" height="3.6" viewBox="0 0 5.4 3.6"><polygon points="0,0 5.4,0 2.7,3.6" fill="#a3322a"></polygon></svg>
<div class="ua" style="left:754.3px;top:394.5px;--cy:400.5"><span class="u">https://lany.co.jp/blog/cannibalization/</span><span class="car"></span></div>
<div class="b" style="left:1017px;top:393.7px;width:29.7px;height:13.6px;background:#fff;box-sizing:border-box;border:1px solid #dcdee2;border-radius:2.5px;"></div>
<svg class="b" style="left:1023px;top:397.5px" width="8" height="6" viewBox="0 0 8 6"><path d="M0.6 5.4L2.8 2.2L4.6 4L7.4 0.6" fill="none" stroke="#222" stroke-width="1.3"></path></svg>
<svg class="b" style="left:1035.5px;top:399.2px" width="5" height="3" viewBox="0 0 5 3"><polygon points="0,0 5,0 2.5,3" fill="#333"></polygon></svg>
<div class="b" style="left:1052px;top:393.7px;width:44.3px;height:13.6px;background:#fff;box-sizing:border-box;border:1px solid #dcdee2;border-radius:2.5px;"></div>
<div class="t f" style="top:394.82px;font-size:9.2px;line-height:11.96px;color:#444;left:1057.7px;--w:24;"><span style="letter-spacing: -0.295px;">SERP</span></div>
<svg class="b" style="left:1085.5px;top:399.2px" width="5" height="3" viewBox="0 0 5 3"><polygon points="0,0 5,0 2.5,3" fill="#333"></polygon></svg>
<div class="t" style="top:394.75px;font-size:9.3px;line-height:12.09px;color:#555;left:1107px;"><span>3<i>日前</i></span></div>
<div class="b" style="left:135px;top:410.8px;width:1047px;height:1.0px;background:#eeeff1;"></div>
<div class="b" style="left:136.3px;top:418.1px;width:8.7px;height:8.7px;background:#fff;box-sizing:border-box;border:1px solid #dcdee2;border-radius:2px;"></div>
<div class="b" style="left:152px;top:422.0px;width:8px;height:1.0px;background:#a9adb3;"></div>
<div class="b" style="left:155.5px;top:418.5px;width:1.0px;height:8.0px;background:#a9adb3;"></div>
<div class="t f" style="top:416.86px;font-size:9.6px;line-height:12.48px;color:#4d5670;left:167.5px;--w:88.7;"><span style="letter-spacing: 0px;"><i style="letter-spacing: -1.397px;">オウンドメディア</i> <i style="letter-spacing: -1.397px;">運用</i></span></div>
<div class="b" style="left:361.8px;top:416.2px;width:13.6px;height:13.6px;border-radius:50%;background:#ebebee"></div>
<div class="t" style="top:417.58px;font-size:8.8px;line-height:11.44px;color:#555;left:218.6px;width:300px;text-align:center;"><span>2</span></div>
<div class="t" style="top:417.58px;font-size:8.8px;line-height:11.44px;color:#444;left:127.5px;width:300px;text-align:right;"><span>1.1K</span></div>
<div class="b" style="left:436.2px;top:415.8px;width:14.8px;height:13.4px;background:#7fc6a2;border-radius:1.5px;"></div>
<div class="t" style="top:417.58px;font-size:8.8px;line-height:11.44px;color:#2b4a3a;left:293.6px;width:300px;text-align:center;"><span>2</span></div>
<div class="t" style="top:417.58px;font-size:8.8px;line-height:11.44px;color:#444;left:258px;width:300px;text-align:right;"><span>3.54</span></div>
<div class="t" style="top:417.58px;font-size:8.8px;line-height:11.44px;color:#333;left:316px;width:300px;text-align:right;"><span>91</span></div>
<div class="t" style="top:417.58px;font-size:8.8px;line-height:11.44px;color:#3b9a67;left:342.3px;width:300px;text-align:right;"><span>+62</span></div>
<div class="t" style="top:417.58px;font-size:8.8px;line-height:11.44px;color:#c5c7cb;left:368.8px;width:300px;text-align:right;"><span>0</span></div>
<div class="t" style="top:417.58px;font-size:8.8px;line-height:11.44px;color:#333;left:551.1px;width:300px;text-align:center;"><span>5</span></div>
<div class="t" style="top:417.58px;font-size:8.8px;line-height:11.44px;color:#999;left:388.4px;width:300px;text-align:right;"><span>12</span></div>
<svg class="b" style="left:689.3px;top:420.0px" width="5.5" height="5" viewBox="0 0 5.5 5"><path d="M0 2.5H4.5M2.8 0.8L4.6 2.5L2.8 4.2" fill="none" stroke="#c4c6ca" stroke-width="0.9"></path></svg>
<div class="t" style="top:417.58px;font-size:8.8px;line-height:11.44px;color:#2c6e4c;left:432.3px;width:300px;text-align:right;"><span>7</span></div>
<svg class="b" style="left:719.8px;top:420.7px" width="5.4" height="3.6" viewBox="0 0 5.4 3.6"><polygon points="0,3.6 5.4,3.6 2.7,0" fill="#2c6e4c"></polygon></svg>
<div class="ua" style="left:754.3px;top:416.5px;--cy:422.5"><span class="u">https://lany.co.jp/blog/owned-media/</span><span class="car"></span></div>
<div class="b" style="left:1017px;top:415.7px;width:29.7px;height:13.6px;background:#fff;box-sizing:border-box;border:1px solid #dcdee2;border-radius:2.5px;"></div>
<svg class="b" style="left:1023px;top:419.5px" width="8" height="6" viewBox="0 0 8 6"><path d="M0.6 5.4L2.8 2.2L4.6 4L7.4 0.6" fill="none" stroke="#222" stroke-width="1.3"></path></svg>
<svg class="b" style="left:1035.5px;top:421.2px" width="5" height="3" viewBox="0 0 5 3"><polygon points="0,0 5,0 2.5,3" fill="#333"></polygon></svg>
<div class="b" style="left:1052px;top:415.7px;width:44.3px;height:13.6px;background:#fff;box-sizing:border-box;border:1px solid #dcdee2;border-radius:2.5px;"></div>
<div class="t f" style="top:416.82px;font-size:9.2px;line-height:11.96px;color:#444;left:1057.7px;--w:24;"><span style="letter-spacing: -0.295px;">SERP</span></div>
<svg class="b" style="left:1085.5px;top:421.2px" width="5" height="3" viewBox="0 0 5 3"><polygon points="0,0 5,0 2.5,3" fill="#333"></polygon></svg>
<div class="t" style="top:416.75px;font-size:9.3px;line-height:12.09px;color:#555;left:1107px;"><span>4<i>日前</i></span></div>
<div class="b" style="left:135px;top:432.8px;width:1047px;height:1.0px;background:#eeeff1;"></div>
<div class="b" style="left:136.3px;top:440.1px;width:8.7px;height:8.7px;background:#fff;box-sizing:border-box;border:1px solid #dcdee2;border-radius:2px;"></div>
<div class="b" style="left:152px;top:444.0px;width:8px;height:1.0px;background:#a9adb3;"></div>
<div class="b" style="left:155.5px;top:440.5px;width:1.0px;height:8.0px;background:#a9adb3;"></div>
<div class="t f" style="top:438.86px;font-size:9.6px;line-height:12.48px;color:#4d5670;left:167.5px;--w:51;"><span style="letter-spacing: 0px;">seo <i style="letter-spacing: -1.785px;">記事制作</i></span></div>
<div class="b" style="left:361.8px;top:438.2px;width:13.6px;height:13.6px;border-radius:50%;background:#ebebee"></div>
<div class="t" style="top:439.58px;font-size:8.8px;line-height:11.44px;color:#555;left:218.6px;width:300px;text-align:center;"><span>3</span></div>
<div class="t" style="top:439.58px;font-size:8.8px;line-height:11.44px;color:#444;left:127.5px;width:300px;text-align:right;"><span>700</span></div>
<div class="b" style="left:436.2px;top:437.8px;width:14.8px;height:13.4px;background:#7fc6a2;border-radius:1.5px;"></div>
<div class="t" style="top:439.58px;font-size:8.8px;line-height:11.44px;color:#2b4a3a;left:293.6px;width:300px;text-align:center;"><span>0</span></div>
<div class="t" style="top:439.58px;font-size:8.8px;line-height:11.44px;color:#444;left:258px;width:300px;text-align:right;"><span>5.96</span></div>
<div class="t" style="top:439.58px;font-size:8.8px;line-height:11.44px;color:#333;left:316px;width:300px;text-align:right;"><span>90</span></div>
<div class="t" style="top:439.58px;font-size:8.8px;line-height:11.44px;color:#b5473c;left:342.3px;width:300px;text-align:right;"><span>−8</span></div>
<div class="t" style="top:439.58px;font-size:8.8px;line-height:11.44px;color:#c5c7cb;left:368.8px;width:300px;text-align:right;"><span>0</span></div>
<div class="t" style="top:439.58px;font-size:8.8px;line-height:11.44px;color:#333;left:551.1px;width:300px;text-align:center;"><span>3</span></div>
<div class="t" style="top:439.58px;font-size:8.8px;line-height:11.44px;color:#999;left:386.6px;width:300px;text-align:right;"><span>2</span></div>
<svg class="b" style="left:689.3px;top:442.0px" width="5.5" height="5" viewBox="0 0 5.5 5"><path d="M0 2.5H4.5M2.8 0.8L4.6 2.5L2.8 4.2" fill="none" stroke="#c4c6ca" stroke-width="0.9"></path></svg>
<div class="t" style="top:439.58px;font-size:8.8px;line-height:11.44px;color:#a3322a;left:432.3px;width:300px;text-align:right;"><span>1</span></div>
<svg class="b" style="left:719.8px;top:442.7px" width="5.4" height="3.6" viewBox="0 0 5.4 3.6"><polygon points="0,0 5.4,0 2.7,3.6" fill="#a3322a"></polygon></svg>
<div class="ua" style="left:754.3px;top:438.5px;--cy:444.5"><span class="u">https://lany.co.jp/writing/</span><span class="car"></span><span class="more">1以上</span></div>
<div class="b" style="left:1017px;top:437.7px;width:29.7px;height:13.6px;background:#fff;box-sizing:border-box;border:1px solid #dcdee2;border-radius:2.5px;"></div>
<svg class="b" style="left:1023px;top:441.5px" width="8" height="6" viewBox="0 0 8 6"><path d="M0.6 5.4L2.8 2.2L4.6 4L7.4 0.6" fill="none" stroke="#222" stroke-width="1.3"></path></svg>
<svg class="b" style="left:1035.5px;top:443.2px" width="5" height="3" viewBox="0 0 5 3"><polygon points="0,0 5,0 2.5,3" fill="#333"></polygon></svg>
<div class="b" style="left:1052px;top:437.7px;width:44.3px;height:13.6px;background:#fff;box-sizing:border-box;border:1px solid #dcdee2;border-radius:2.5px;"></div>
<div class="t f" style="top:438.82px;font-size:9.2px;line-height:11.96px;color:#444;left:1057.7px;--w:24;"><span style="letter-spacing: -0.295px;">SERP</span></div>
<svg class="b" style="left:1085.5px;top:443.2px" width="5" height="3" viewBox="0 0 5 3"><polygon points="0,0 5,0 2.5,3" fill="#333"></polygon></svg>
<div class="t" style="top:438.75px;font-size:9.3px;line-height:12.09px;color:#555;left:1107px;"><span>11<i>日前</i></span></div>
<div class="b" style="left:135px;top:454.8px;width:1047px;height:1.0px;background:#eeeff1;"></div>
<div class="b" style="left:136.3px;top:462.3px;width:8.7px;height:8.7px;background:#fff;box-sizing:border-box;border:1px solid #dcdee2;border-radius:2px;"></div>
<div class="b" style="left:152px;top:466.2px;width:8px;height:1.0px;background:#a9adb3;"></div>
<div class="b" style="left:155.5px;top:462.7px;width:1.0px;height:8.0px;background:#a9adb3;"></div>
<div class="t f" style="top:461.06px;font-size:9.6px;line-height:12.48px;color:#4d5670;left:167.5px;--w:48;"><span style="letter-spacing: 0px;">seo<i style="letter-spacing: -1.867px;">コンサル</i></span></div>
<div class="b" style="left:361.8px;top:460.4px;width:13.6px;height:13.6px;border-radius:50%;background:#ebebee"></div>
<div class="t" style="top:461.78px;font-size:8.8px;line-height:11.44px;color:#555;left:218.6px;width:300px;text-align:center;"><span>4</span></div>
<div class="t" style="top:461.78px;font-size:8.8px;line-height:11.44px;color:#444;left:127.5px;width:300px;text-align:right;"><span>2.2K</span></div>
<div class="b" style="left:436.2px;top:460.0px;width:14.8px;height:13.4px;background:#7fc6a2;border-radius:1.5px;"></div>
<div class="t" style="top:461.78px;font-size:8.8px;line-height:11.44px;color:#2b4a3a;left:293.6px;width:300px;text-align:center;"><span>9</span></div>
<div class="t" style="top:461.78px;font-size:8.8px;line-height:11.44px;color:#444;left:258px;width:300px;text-align:right;"><span>3.98</span></div>
<div class="t" style="top:461.78px;font-size:8.8px;line-height:11.44px;color:#333;left:316px;width:300px;text-align:right;"><span>87</span></div>
<div class="t" style="top:461.78px;font-size:8.8px;line-height:11.44px;color:#3b9a67;left:342.3px;width:300px;text-align:right;"><span>+28</span></div>
<div class="t" style="top:461.78px;font-size:8.8px;line-height:11.44px;color:#c5c7cb;left:368.8px;width:300px;text-align:right;"><span>0</span></div>
<div class="t" style="top:461.78px;font-size:8.8px;line-height:11.44px;color:#333;left:551.1px;width:300px;text-align:center;"><span>9</span></div>
<div class="t" style="top:461.78px;font-size:8.8px;line-height:11.44px;color:#999;left:388.4px;width:300px;text-align:right;"><span>12</span></div>
<svg class="b" style="left:689.3px;top:464.2px" width="5.5" height="5" viewBox="0 0 5.5 5"><path d="M0 2.5H4.5M2.8 0.8L4.6 2.5L2.8 4.2" fill="none" stroke="#c4c6ca" stroke-width="0.9"></path></svg>
<div class="t" style="top:461.78px;font-size:8.8px;line-height:11.44px;color:#2c6e4c;left:432.3px;width:300px;text-align:right;"><span>3</span></div>
<svg class="b" style="left:719.8px;top:464.9px" width="5.4" height="3.6" viewBox="0 0 5.4 3.6"><polygon points="0,3.6 5.4,3.6 2.7,0" fill="#2c6e4c"></polygon></svg>
<div class="ua" style="left:754.3px;top:460.7px;--cy:466.7"><span class="u">https://lany.co.jp/seo/</span><span class="car"></span></div>
<svg class="b" style="left:754.9px;top:474.8px" width="7.8" height="7" viewBox="0 0 7.8 7"><rect x="0.55" y="0.55" width="6.7" height="5.9" rx="1" fill="none" stroke="#9a9da3" stroke-width="1.1"></rect><path d="M1.3 5.8L3 4.2L4.4 5L6.5 3.9V5.8Z" fill="#9a9da3"></path><circle cx="5" cy="2.5" r="0.9" fill="#9a9da3"></circle></svg>
<div class="ua" style="left:765.5px;top:472.3px;"><span class="u2">https://lany.co.jp/seo/</span><span class="car c2"></span></div>
<div class="b" style="left:1017px;top:459.9px;width:29.7px;height:13.6px;background:#fff;box-sizing:border-box;border:1px solid #dcdee2;border-radius:2.5px;"></div>
<svg class="b" style="left:1023px;top:463.7px" width="8" height="6" viewBox="0 0 8 6"><path d="M0.6 5.4L2.8 2.2L4.6 4L7.4 0.6" fill="none" stroke="#222" stroke-width="1.3"></path></svg>
<svg class="b" style="left:1035.5px;top:465.4px" width="5" height="3" viewBox="0 0 5 3"><polygon points="0,0 5,0 2.5,3" fill="#333"></polygon></svg>
<div class="b" style="left:1052px;top:459.9px;width:44.3px;height:13.6px;background:#fff;box-sizing:border-box;border:1px solid #dcdee2;border-radius:2.5px;"></div>
<div class="t f" style="top:461.02px;font-size:9.2px;line-height:11.96px;color:#444;left:1057.7px;--w:24;"><span style="letter-spacing: -0.295px;">SERP</span></div>
<svg class="b" style="left:1085.5px;top:465.4px" width="5" height="3" viewBox="0 0 5 3"><polygon points="0,0 5,0 2.5,3" fill="#333"></polygon></svg>
<div class="t" style="top:460.95px;font-size:9.3px;line-height:12.09px;color:#555;left:1107px;"><span>5<i>日前</i></span></div>
<div class="b" style="left:135px;top:488.3px;width:1047px;height:1.0px;background:#eeeff1;"></div>
<div class="b" style="left:136.3px;top:495.6px;width:8.7px;height:8.7px;background:#fff;box-sizing:border-box;border:1px solid #dcdee2;border-radius:2px;"></div>
<div class="b" style="left:152px;top:499.5px;width:8px;height:1.0px;background:#a9adb3;"></div>
<div class="b" style="left:155.5px;top:496.0px;width:1.0px;height:8.0px;background:#a9adb3;"></div>
<div class="t f" style="top:494.36px;font-size:9.6px;line-height:12.48px;color:#4d5670;left:167.5px;--w:72.6;"><span style="letter-spacing: 0px;"><i style="letter-spacing: -1.259px;">被リンク</i> <i style="letter-spacing: -1.259px;">獲得方法</i></span></div>
<div class="b" style="left:361.8px;top:493.7px;width:13.6px;height:13.6px;border-radius:50%;background:#ebebee"></div>
<div class="t" style="top:495.08px;font-size:8.8px;line-height:11.44px;color:#555;left:218.6px;width:300px;text-align:center;"><span>4</span></div>
<div class="t" style="top:495.08px;font-size:8.8px;line-height:11.44px;color:#444;left:127.5px;width:300px;text-align:right;"><span>900</span></div>
<div class="b" style="left:436.2px;top:493.3px;width:14.8px;height:13.4px;background:#7fc6a2;border-radius:1.5px;"></div>
<div class="t" style="top:495.08px;font-size:8.8px;line-height:11.44px;color:#2b4a3a;left:293.6px;width:300px;text-align:center;"><span>0</span></div>
<div class="t" style="top:495.08px;font-size:8.8px;line-height:11.44px;color:#444;left:258px;width:300px;text-align:right;"><span>0.24</span></div>
<div class="t" style="top:495.08px;font-size:8.8px;line-height:11.44px;color:#333;left:316px;width:300px;text-align:right;"><span>78</span></div>
<div class="t" style="top:495.08px;font-size:8.8px;line-height:11.44px;color:#b5473c;left:342.3px;width:300px;text-align:right;"><span>−29</span></div>
<div class="t" style="top:495.08px;font-size:8.8px;line-height:11.44px;color:#c5c7cb;left:368.8px;width:300px;text-align:right;"><span>0</span></div>
<div class="t" style="top:495.08px;font-size:8.8px;line-height:11.44px;color:#333;left:551.1px;width:300px;text-align:center;"><span>5</span></div>
<div class="t" style="top:495.08px;font-size:8.8px;line-height:11.44px;color:#999;left:386.6px;width:300px;text-align:right;"><span>3</span></div>
<svg class="b" style="left:689.3px;top:497.5px" width="5.5" height="5" viewBox="0 0 5.5 5"><path d="M0 2.5H4.5M2.8 0.8L4.6 2.5L2.8 4.2" fill="none" stroke="#c4c6ca" stroke-width="0.9"></path></svg>
<div class="t" style="top:495.08px;font-size:8.8px;line-height:11.44px;color:#a3322a;left:432.3px;width:300px;text-align:right;"><span>2</span></div>
<svg class="b" style="left:719.8px;top:498.2px" width="5.4" height="3.6" viewBox="0 0 5.4 3.6"><polygon points="0,0 5.4,0 2.7,3.6" fill="#a3322a"></polygon></svg>
<div class="ua" style="left:754.3px;top:494.0px;--cy:500.0"><span class="u">https://lany.co.jp/blog/backlink/</span><span class="car"></span></div>
<div class="b" style="left:1017px;top:493.2px;width:29.7px;height:13.6px;background:#fff;box-sizing:border-box;border:1px solid #dcdee2;border-radius:2.5px;"></div>
<svg class="b" style="left:1023px;top:497.0px" width="8" height="6" viewBox="0 0 8 6"><path d="M0.6 5.4L2.8 2.2L4.6 4L7.4 0.6" fill="none" stroke="#222" stroke-width="1.3"></path></svg>
<svg class="b" style="left:1035.5px;top:498.7px" width="5" height="3" viewBox="0 0 5 3"><polygon points="0,0 5,0 2.5,3" fill="#333"></polygon></svg>
<div class="b" style="left:1052px;top:493.2px;width:44.3px;height:13.6px;background:#fff;box-sizing:border-box;border:1px solid #dcdee2;border-radius:2.5px;"></div>
<div class="t f" style="top:494.32px;font-size:9.2px;line-height:11.96px;color:#444;left:1057.7px;--w:24;"><span style="letter-spacing: -0.295px;">SERP</span></div>
<svg class="b" style="left:1085.5px;top:498.7px" width="5" height="3" viewBox="0 0 5 3"><polygon points="0,0 5,0 2.5,3" fill="#333"></polygon></svg>
<div class="t" style="top:494.25px;font-size:9.3px;line-height:12.09px;color:#555;left:1107px;"><span>3<i>日前</i></span></div>
<div class="b" style="left:135px;top:510.3px;width:1047px;height:1.0px;background:#eeeff1;"></div>
<div class="b" style="left:136.3px;top:517.8000000000001px;width:8.7px;height:8.7px;background:#fff;box-sizing:border-box;border:1px solid #dcdee2;border-radius:2px;"></div>
<div class="b" style="left:152px;top:521.7px;width:8px;height:1.0px;background:#a9adb3;"></div>
<div class="b" style="left:155.5px;top:518.2px;width:1.0px;height:8.0px;background:#a9adb3;"></div>
<div class="t f" style="top:516.56px;font-size:9.6px;line-height:12.48px;color:#4d5670;left:167.5px;--w:86;"><span style="letter-spacing: 0px;"><i style="letter-spacing: -1.4px;">オウンドメディア戦略</i></span></div>
<div class="b" style="left:361.8px;top:515.9px;width:13.6px;height:13.6px;border-radius:50%;background:#ebebee"></div>
<div class="t" style="top:517.28px;font-size:8.8px;line-height:11.44px;color:#555;left:218.6px;width:300px;text-align:center;"><span>3</span></div>
<div class="t" style="top:517.28px;font-size:8.8px;line-height:11.44px;color:#444;left:127.5px;width:300px;text-align:right;"><span>200</span></div>
<div class="b" style="left:436.2px;top:515.5px;width:14.8px;height:13.4px;background:#7fc6a2;border-radius:1.5px;"></div>
<div class="t" style="top:517.28px;font-size:8.8px;line-height:11.44px;color:#2b4a3a;left:293.6px;width:300px;text-align:center;"><span>0</span></div>
<div class="t" style="top:517.28px;font-size:8.8px;line-height:11.44px;color:#444;left:258px;width:300px;text-align:right;"><span>2.20</span></div>
<div class="t" style="top:517.28px;font-size:8.8px;line-height:11.44px;color:#333;left:316px;width:300px;text-align:right;"><span>78</span></div>
<div class="t" style="top:517.28px;font-size:8.8px;line-height:11.44px;color:#3b9a67;left:342.3px;width:300px;text-align:right;"><span>+73</span></div>
<div class="t" style="top:517.28px;font-size:8.8px;line-height:11.44px;color:#c5c7cb;left:368.8px;width:300px;text-align:right;"><span>0</span></div>
<div class="t" style="top:517.28px;font-size:8.8px;line-height:11.44px;color:#333;left:551.1px;width:300px;text-align:center;"><span>1</span></div>
<div class="t" style="top:517.28px;font-size:8.8px;line-height:11.44px;color:#999;left:388.4px;width:300px;text-align:right;"><span>12</span></div>
<svg class="b" style="left:689.3px;top:519.7px" width="5.5" height="5" viewBox="0 0 5.5 5"><path d="M0 2.5H4.5M2.8 0.8L4.6 2.5L2.8 4.2" fill="none" stroke="#c4c6ca" stroke-width="0.9"></path></svg>
<div class="t" style="top:517.28px;font-size:8.8px;line-height:11.44px;color:#2c6e4c;left:432.3px;width:300px;text-align:right;"><span>11</span></div>
<svg class="b" style="left:714.8px;top:520.4px" width="5.4" height="3.6" viewBox="0 0 5.4 3.6"><polygon points="0,3.6 5.4,3.6 2.7,0" fill="#2c6e4c"></polygon></svg>
<svg class="b" style="left:743.3px;top:519.4000000000001px" width="8.2" height="6" viewBox="0 0 8.2 6"><g fill="#2c3344"><circle cx="1.9" cy="4" r="1.75"></circle><path d="M0.15 4C0.15 2 1.1 0.7 2.8 0.2L3 0.9C2 1.4 1.5 2.1 1.4 2.8Z"></path><circle cx="6.1" cy="2" r="1.75"></circle><path d="M7.85 2C7.85 4 6.9 5.3 5.2 5.8L5 5.1C6 4.6 6.5 3.9 6.6 3.2Z"></path></g></svg>
<svg class="b" style="left:755px;top:518.6px" width="7.6" height="7.4" viewBox="0 0 7.6 7.4"><rect x="0" y="0" width="7.6" height="7.4" rx="1.3" fill="#2c3344"></rect><path d="M1.2 6.3L3 4.4L4.5 5.3L6.4 4.3V6.3Z" fill="#fff"></path><circle cx="5" cy="2.5" r="1.1" fill="#fff"></circle></svg>
<div class="ua" style="left:765.5px;top:516.2px;--cy:522.2"><span class="u">https://lany.co.jp/blog/owned-media-strategy/</span><span class="car"></span><span class="more">1以上</span></div>
<div class="ua" style="left:754.3px;top:527.8px;"><span class="u2">https://lany.co.jp/blog/owned-media-strategy/</span><span class="car c2"></span></div>
<div class="b" style="left:1017px;top:515.4000000000001px;width:29.7px;height:13.6px;background:#fff;box-sizing:border-box;border:1px solid #dcdee2;border-radius:2.5px;"></div>
<svg class="b" style="left:1023px;top:519.2px" width="8" height="6" viewBox="0 0 8 6"><path d="M0.6 5.4L2.8 2.2L4.6 4L7.4 0.6" fill="none" stroke="#222" stroke-width="1.3"></path></svg>
<svg class="b" style="left:1035.5px;top:520.9px" width="5" height="3" viewBox="0 0 5 3"><polygon points="0,0 5,0 2.5,3" fill="#333"></polygon></svg>
<div class="b" style="left:1052px;top:515.4000000000001px;width:44.3px;height:13.6px;background:#fff;box-sizing:border-box;border:1px solid #dcdee2;border-radius:2.5px;"></div>
<div class="t f" style="top:516.52px;font-size:9.2px;line-height:11.96px;color:#444;left:1057.7px;--w:24;"><span style="letter-spacing: -0.295px;">SERP</span></div>
<svg class="b" style="left:1085.5px;top:520.9px" width="5" height="3" viewBox="0 0 5 3"><polygon points="0,0 5,0 2.5,3" fill="#333"></polygon></svg>
<div class="t" style="top:516.46px;font-size:9.3px;line-height:12.09px;color:#555;left:1107px;"><span>6<i>日前</i></span></div>
<div class="b" style="left:135px;top:543.8px;width:1047px;height:1.0px;background:#eeeff1;"></div>
<div class="b" style="left:1164.7px;top:504.4px;width:25.4px;height:25.4px;border-radius:50%;background:#2b3a55;color:#fff;font-size:15px;line-height:25.4px;text-align:center;font-weight:normal">?</div>


<script>
(function(){var els=document.querySelectorAll('.f');for(var i=0;i<els.length;i++){var e=els[i];var w=parseFloat(getComputedStyle(e).getPropertyValue('--w'));if(!w)continue;var sp=e.firstChild;var js=sp.getElementsByTagName('i');for(var k=0;k<js.length;k++)js[k].style.letterSpacing='0px';sp.style.letterSpacing='0px';var r=sp.getBoundingClientRect().width;var n=0;for(var k=0;k<js.length;k++)n+=js[k].textContent.length;var ls;if(n>0){ls=(w-r)/n;if(ls>3)ls=3;if(ls<-5)ls=-5;for(var k=0;k<js.length;k++)js[k].style.letterSpacing=ls.toFixed(3)+'px';}else{n=sp.textContent.length;if(n<2)continue;ls=(w-r)/(n-0.5);if(ls>2)ls=2;if(ls<-2)ls=-2;sp.style.letterSpacing=ls.toFixed(3)+'px';}}})();
</script>
</body></html>
